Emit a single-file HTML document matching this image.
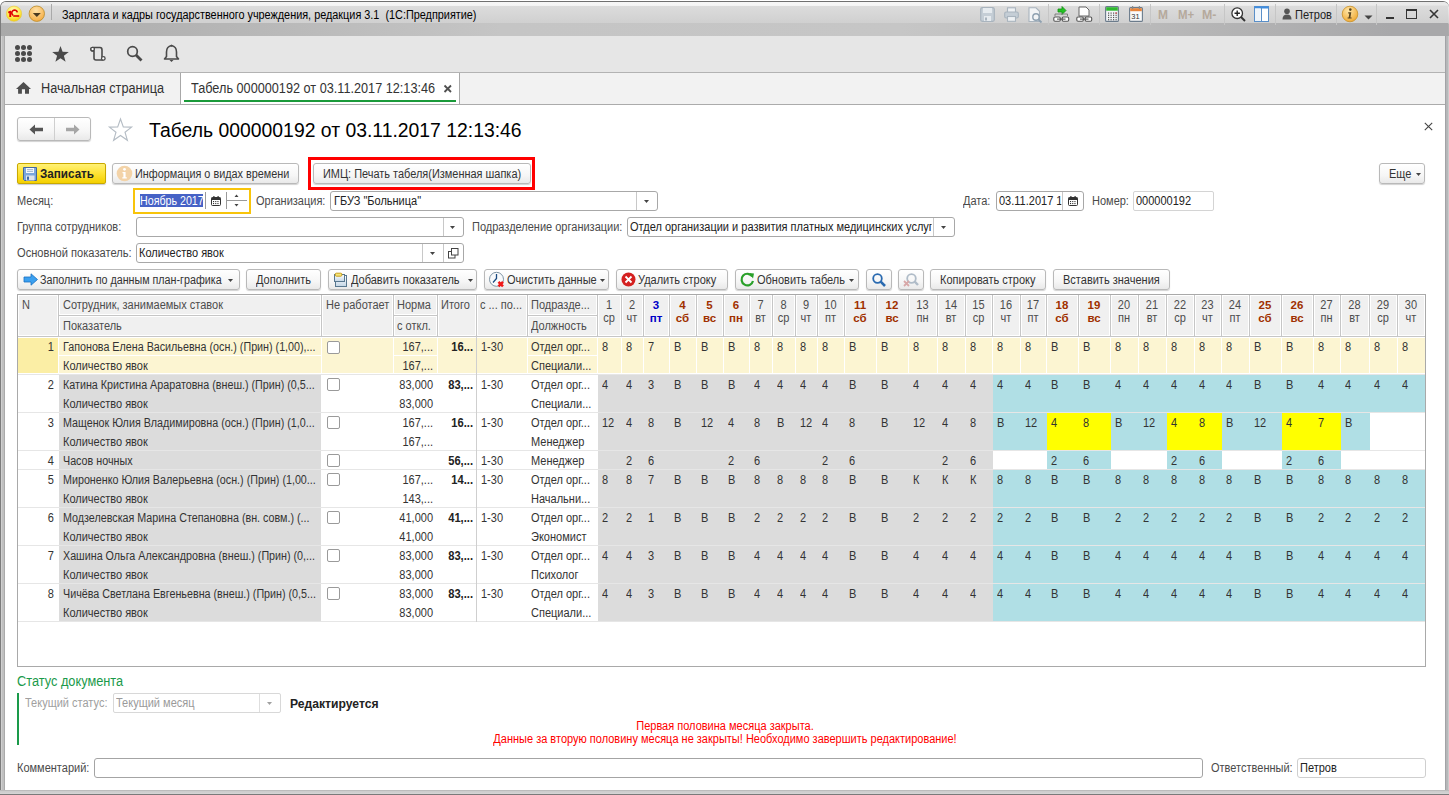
<!DOCTYPE html>
<html><head><meta charset="utf-8"><title>Табель</title>
<style>
html,body{margin:0;padding:0;width:1449px;height:795px;overflow:hidden;background:#a8a8a8;}
body{position:relative;font-family:"Liberation Sans",sans-serif;}
.r{position:absolute;box-sizing:border-box;}
.t{position:absolute;white-space:nowrap;line-height:normal;}
svg.r{overflow:visible;}
</style></head><body>
<div class="r" style="left:0px;top:0px;width:1449px;height:795px;background:#ffffff;"></div>
<div class="r" style="left:0px;top:1px;width:1449px;height:794px;background:linear-gradient(180deg,#f2f2f2 0,#e4e4e4 10px,#d2d2d2 21px,#b2b2b2 22px,#aeaeae 28px,#a9a9a9 35px,#b4b4b4 36px,#b4b4b4 100%);border-top:1px solid #707070;border-left:1px solid #7c7c7c;border-radius:6px 6px 0 0;"></div>
<div class="r" style="left:1px;top:2px;width:1447px;height:21px;background:linear-gradient(90deg,rgba(255,255,255,0) 0,rgba(255,255,255,.55) 250px,rgba(255,255,255,.6) 900px,rgba(255,255,255,.5) 1110px,rgba(255,255,255,0) 1447px) 0 0/100% 4px no-repeat,linear-gradient(180deg,#e9e9e9 0,#e9e9e9 3px,#dcdcdc 4px,#d0d0d0 21px);border-radius:5px 5px 0 0;"></div>
<div class="r" style="left:1px;top:23px;width:1447px;height:13px;background:linear-gradient(90deg,#a9a9a9 0,#b0b0b0 110px,#b8b8b8 260px,#c5c5c5 500px,#c6c6c6 900px,#bcbcbc 1110px,#a8a8aa 1390px,#a8a8aa 100%);"></div>
<div class="r" style="left:1px;top:36px;width:4px;height:755px;background:linear-gradient(90deg,#d0d0d0 0,#d0d0d0 1px,#c0c0c0 1px,#c0c0c0 3px,#aaaaaa 3px);"></div>
<div class="r" style="left:1445px;top:36px;width:4px;height:755px;background:linear-gradient(90deg,#a2a3a6 0,#a2a3a6 1px,#b5b6b8 1px,#b8b9bb 3px,#cbcbcb 3px);"></div>
<div class="r" style="left:0px;top:790px;width:1449px;height:5px;background:linear-gradient(180deg,#bcbcbc 0,#bcbcbc 1px,#cbcbcb 1px,#cfcfcf 2px,#d0d0d0 3px,#d8d8d8 4px,#7a7a7a 4px);"></div>
<div class="r" style="left:5px;top:36px;width:1440px;height:36px;background:#e6e6e6;"></div>
<div class="r" style="left:5px;top:72px;width:1440px;height:1px;background:#b3b3b3;"></div>
<div class="r" style="left:5px;top:73px;width:1440px;height:31px;background:#f2f2f2;"></div>
<div class="r" style="left:5px;top:104px;width:1440px;height:1px;background:#ababab;"></div>
<div class="r" style="left:5px;top:105px;width:1440px;height:685px;background:#ffffff;"></div>
<svg class="r" style="left:0px;top:0px" width="60" height="30" viewBox="0 0 60 30"><defs><radialGradient id="g1" cx="45%" cy="30%" r="75%"><stop offset="0" stop-color="#fffbc0"/><stop offset="0.6" stop-color="#ffe94a"/><stop offset="1" stop-color="#f2c800"/></radialGradient><radialGradient id="g2" cx="45%" cy="30%" r="75%"><stop offset="0" stop-color="#ffe2a8"/><stop offset="1" stop-color="#f5a93c"/></radialGradient></defs><circle cx="14" cy="13.7" r="7.6" fill="url(#g1)" stroke="#e6c640" stroke-width="0.6"/><path d="M8.2 11.6 L10.2 10.8 H11.2 V16.9 H9.3 V12.9 L8.2 13.3 Z" fill="#e00000"/><path d="M17.3 12.3 A2.8 2.8 0 1 0 13.2 15.3" fill="none" stroke="#e00000" stroke-width="1.7"/><path d="M13.2 15.2 H19.2 V16.8 H13.2 Z" fill="#e00000"/><circle cx="36.8" cy="13.7" r="7.7" fill="url(#g2)" stroke="#b88a2a" stroke-width="0.8"/><path d="M32.8 12.9 H40.8 L36.8 17 Z" fill="#4a3a20"/><rect x="51" y="4" width="1" height="16" fill="#a9a9a9"/></svg>
<div class="t" style="left:62px;top:7.64px;font-size:12px;color:#000;transform:scaleX(0.905);transform-origin:0 0;">Зарплата и кадры государственного учреждения, редакция 3.1  (1С:Предприятие)</div>
<svg class="r" style="left:980px;top:7px" width="15" height="15" viewBox="0 0 15 15"><rect x="0.7" y="0.7" width="13.6" height="13.6" rx="1.5" fill="#c5ced6" stroke="#a9b4be" stroke-width="1.2"/><rect x="3" y="1" width="9" height="5" fill="#e6ebef"/><rect x="4" y="9" width="7" height="5" fill="#e6ebef"/><rect x="5" y="10.5" width="2" height="3" fill="#a9b4be"/></svg>
<svg class="r" style="left:1004px;top:7px" width="15" height="15" viewBox="0 0 15 15"><rect x="3.5" y="0.8" width="8" height="5" fill="#eef1f4" stroke="#a9b4be" stroke-width="1.1"/><rect x="0.7" y="5" width="13.6" height="6" rx="1.5" fill="#c5ced6" stroke="#a9b4be" stroke-width="1.1"/><rect x="3.5" y="9.5" width="8" height="4.8" fill="#eef1f4" stroke="#a9b4be" stroke-width="1.1"/></svg>
<svg class="r" style="left:1028px;top:7px" width="15" height="16" viewBox="0 0 15 16"><path d="M1 0.8 H8 L11.5 4.3 V14.5 H1 Z" fill="#f2f4f6" stroke="#a9b4be" stroke-width="1.1"/><circle cx="8" cy="10" r="3.2" fill="none" stroke="#8ea0b0" stroke-width="1.4"/><path d="M10.3 12.3 L13.5 15.5" stroke="#8ea0b0" stroke-width="1.8"/></svg>
<div class="r" style="left:1048px;top:4px;width:1px;height:21px;background:#c6c6c6;"></div>
<svg class="r" style="left:1053px;top:6px" width="17" height="17" viewBox="0 0 17 17"><path d="M5 3 H9 V0.5 L13 4.5 L9 8.5 V6 H5 Z" fill="#22c322" stroke="#139013" stroke-width="0.8"/><rect x="0.8" y="11" width="6.5" height="4.2" rx="1.2" fill="#fff" stroke="#555" stroke-width="1.1"/><rect x="9.2" y="11" width="6.5" height="4.2" rx="1.2" fill="#fff" stroke="#555" stroke-width="1.1"/><path d="M4 13.1 H12.5" stroke="#555" stroke-width="1.1"/><path d="M2 10 V8 H14.5 V10" fill="none" stroke="#777" stroke-width="0.9"/></svg>
<svg class="r" style="left:1076px;top:6px" width="17" height="17" viewBox="0 0 17 17"><path d="M3 1 H10 L13 4 V10 H3 Z" fill="#fff" stroke="#666" stroke-width="1"/><rect x="0.8" y="11" width="6.5" height="4.2" rx="1.2" fill="#fff" stroke="#555" stroke-width="1.1"/><rect x="9.2" y="11" width="6.5" height="4.2" rx="1.2" fill="#fff" stroke="#555" stroke-width="1.1"/><path d="M4 13.1 H12.5" stroke="#555" stroke-width="1.1"/></svg>
<div class="r" style="left:1099px;top:4px;width:1px;height:21px;background:#c6c6c6;"></div>
<svg class="r" style="left:1105px;top:6px" width="14" height="16" viewBox="0 0 14 16"><rect x="0.6" y="0.6" width="12.8" height="14.8" rx="1" fill="#f4f6f8" stroke="#6b7b8b" stroke-width="1.1"/><rect x="1.2" y="1.2" width="11.6" height="3.5" fill="#2eb82e"/><rect x="3.0" y="6.5" width="1.2" height="1.2" fill="#555"/><rect x="3.0" y="8.7" width="1.2" height="1.2" fill="#555"/><rect x="3.0" y="10.9" width="1.2" height="1.2" fill="#555"/><rect x="3.0" y="13.100000000000001" width="1.2" height="1.2" fill="#555"/><rect x="5.5" y="6.5" width="1.2" height="1.2" fill="#555"/><rect x="5.5" y="8.7" width="1.2" height="1.2" fill="#555"/><rect x="5.5" y="10.9" width="1.2" height="1.2" fill="#555"/><rect x="5.5" y="13.100000000000001" width="1.2" height="1.2" fill="#555"/><rect x="8.0" y="6.5" width="1.2" height="1.2" fill="#555"/><rect x="8.0" y="8.7" width="1.2" height="1.2" fill="#555"/><rect x="8.0" y="10.9" width="1.2" height="1.2" fill="#555"/><rect x="8.0" y="13.100000000000001" width="1.2" height="1.2" fill="#555"/><rect x="10.5" y="6.5" width="1.2" height="1.2" fill="#555"/><rect x="10.5" y="8.7" width="1.2" height="1.2" fill="#555"/><rect x="10.5" y="10.9" width="1.2" height="1.2" fill="#555"/><rect x="10.5" y="13.100000000000001" width="1.2" height="1.2" fill="#555"/><rect x="10.5" y="6.5" width="1.2" height="1.2" fill="#e02020"/></svg>
<svg class="r" style="left:1129px;top:6px" width="14" height="16" viewBox="0 0 14 16"><rect x="0.6" y="1.6" width="12.8" height="13.8" rx="1" fill="#fafafa" stroke="#6b7b8b" stroke-width="1.1"/><rect x="1.2" y="2.2" width="11.6" height="3" fill="#e8843a"/><rect x="3" y="0" width="1.2" height="3" fill="#888"/><rect x="9.8" y="0" width="1.2" height="3" fill="#888"/><text x="2.3" y="13.2" font-family="Liberation Sans" font-size="7.5" fill="#333">31</text></svg>
<div class="r" style="left:1150px;top:4px;width:1px;height:21px;background:#c6c6c6;"></div>
<div class="t" style="left:1157.5px;top:6.73px;font-size:13px;color:#b5a99c;font-weight:bold;transform:scaleX(0.92);transform-origin:0 0;">M</div>
<div class="t" style="left:1177.5px;top:6.73px;font-size:13px;color:#b5a99c;font-weight:bold;transform:scaleX(0.88);transform-origin:0 0;">M+</div>
<div class="t" style="left:1202px;top:6.73px;font-size:13px;color:#b5a99c;font-weight:bold;transform:scaleX(0.95);transform-origin:0 0;">M-</div>
<div class="r" style="left:1224px;top:4px;width:1px;height:21px;background:#c6c6c6;"></div>
<svg class="r" style="left:1231px;top:7px" width="15" height="15" viewBox="0 0 15 15"><circle cx="6.2" cy="6.2" r="5.3" fill="#fff" stroke="#333" stroke-width="1.3"/><path d="M3.5 6.2 H8.9 M6.2 3.5 V8.9" stroke="#222" stroke-width="1.4"/><path d="M10 10 L14 14" stroke="#333" stroke-width="2"/></svg>
<svg class="r" style="left:1254px;top:6px" width="15" height="16" viewBox="0 0 15 16"><rect x="0.5" y="0.5" width="14" height="15" fill="#fff" stroke="#5a8fc8" stroke-width="1"/><rect x="0.5" y="0.5" width="14" height="2" fill="#3f8de0"/><rect x="1" y="2.5" width="5.5" height="12.5" fill="#eef4fa"/><rect x="7" y="2" width="1" height="13.5" fill="#5a8fc8"/></svg>
<div class="r" style="left:1275px;top:4px;width:1px;height:21px;background:#c6c6c6;"></div>
<svg class="r" style="left:1282px;top:8px" width="10" height="12" viewBox="0 0 10 12"><circle cx="5" cy="3.2" r="2.8" fill="#555"/><path d="M0.5 11.5 Q0.5 6.5 5 6.5 Q9.5 6.5 9.5 11.5 Z" fill="#555"/></svg>
<div class="t" style="left:1295px;top:7.64px;font-size:12px;color:#222;transform:scaleX(0.92);transform-origin:0 0;">Петров</div>
<div class="r" style="left:1336px;top:4px;width:1px;height:21px;background:#c6c6c6;"></div>
<svg class="r" style="left:1341px;top:5px" width="18" height="18" viewBox="0 0 18 18"><defs><radialGradient id="g3" cx="40%" cy="30%" r="75%"><stop offset="0" stop-color="#ffe6a8"/><stop offset="1" stop-color="#f0a830"/></radialGradient></defs><circle cx="9" cy="9" r="7.8" fill="url(#g3)" stroke="#c89028" stroke-width="0.8"/><circle cx="9.3" cy="4.6" r="1.3" fill="#5a4520"/><path d="M7.2 7.2 H10.3 L9.4 12.4 H10.6 V13.6 H6.6 V12.4 H7.7 L8.3 8.4 H7.2 Z" fill="#5a4520"/></svg>
<svg class="r" style="left:1364px;top:15px" width="9" height="5" viewBox="0 0 9 5"><path d="M0.5 0.5 H8.5 L4.5 4.5 Z" fill="#444"/></svg>
<div class="r" style="left:1376px;top:4px;width:1px;height:21px;background:#c6c6c6;"></div>
<div class="r" style="left:1386px;top:17px;width:8px;height:2px;background:#333;"></div>
<div class="r" style="left:1406px;top:9px;width:11px;height:10px;border:1px solid #333;border-top:2px solid #333;"></div>
<svg class="r" style="left:1429px;top:9px" width="10" height="10" viewBox="0 0 10 10"><path d="M1 1 L9 9 M9 1 L1 9" stroke="#333" stroke-width="1.6"/></svg>
<svg class="r" style="left:15px;top:45px" width="17" height="17" viewBox="0 0 17 17"><circle cx="2.5" cy="2.5" r="2.5" fill="#4a4a4a"/><circle cx="2.5" cy="8.5" r="2.5" fill="#4a4a4a"/><circle cx="2.5" cy="14.5" r="2.5" fill="#4a4a4a"/><circle cx="8.5" cy="2.5" r="2.5" fill="#4a4a4a"/><circle cx="8.5" cy="8.5" r="2.5" fill="#4a4a4a"/><circle cx="8.5" cy="14.5" r="2.5" fill="#4a4a4a"/><circle cx="14.5" cy="2.5" r="2.5" fill="#4a4a4a"/><circle cx="14.5" cy="8.5" r="2.5" fill="#4a4a4a"/><circle cx="14.5" cy="14.5" r="2.5" fill="#4a4a4a"/></svg>
<svg class="r" style="left:52px;top:46px" width="17" height="16" viewBox="0 0 17 16"><path d="M8.5 0 L10.6 5.8 L16.8 6 L11.9 9.8 L13.6 15.8 L8.5 12.3 L3.4 15.8 L5.1 9.8 L0.2 6 L6.4 5.8 Z" fill="#4a4a4a"/></svg>
<svg class="r" style="left:89px;top:45px" width="18" height="17" viewBox="0 0 18 17"><path d="M4 2.5 H11 Q13 2.5 13 5 V12.5 M4 2.5 Q2 2.5 2 4.2 Q2 6 4 6 H5 V13 Q5 15 7 15 H14.5" fill="none" stroke="#4a4a4a" stroke-width="1.6"/><circle cx="3.6" cy="4.1" r="1.8" fill="#fff" stroke="#4a4a4a" stroke-width="1.3"/><circle cx="14.3" cy="13.4" r="1.8" fill="#fff" stroke="#4a4a4a" stroke-width="1.3"/></svg>
<svg class="r" style="left:126px;top:45px" width="17" height="17" viewBox="0 0 17 17"><circle cx="6.5" cy="6.5" r="4.8" fill="none" stroke="#4a4a4a" stroke-width="1.7"/><path d="M10 10 L15.5 15.5" stroke="#4a4a4a" stroke-width="2.8"/></svg>
<svg class="r" style="left:163px;top:44px" width="17" height="19" viewBox="0 0 17 19"><path d="M8.5 1.5 Q13.5 2.5 13.5 8 V12.5 L15.5 15 H1.5 L3.5 12.5 V8 Q3.5 2.5 8.5 1.5 Z" fill="none" stroke="#4a4a4a" stroke-width="1.6" stroke-linejoin="round"/><path d="M6.5 16 H10.5 L8.5 18 Z" fill="#4a4a4a"/><circle cx="8.5" cy="1.8" r="1" fill="#4a4a4a"/></svg>
<svg class="r" style="left:16px;top:82px" width="15" height="12" viewBox="0 0 15 12"><path d="M0 7 L7.5 0 L15 7 Z M2.1 6.5 H13 V11.8 H9 V7.3 H5.9 V11.8 H2.1 Z" fill="#4d4d4d"/></svg>
<div class="t" style="left:41px;top:80.33px;font-size:14px;color:#333;transform:scaleX(0.908);transform-origin:0 0;">Начальная страница</div>
<div class="r" style="left:180px;top:73px;width:1px;height:31px;background:#a8a8a8;"></div>
<div class="r" style="left:459px;top:73px;width:1px;height:31px;background:#a8a8a8;"></div>
<div class="r" style="left:181px;top:73px;width:278px;height:31px;background:#ffffff;"></div>
<div class="r" style="left:184px;top:100px;width:272px;height:2px;background:#1a9a3a;"></div>
<div class="t" style="left:191px;top:80.33px;font-size:14px;color:#333;transform:scaleX(0.906);transform-origin:0 0;">Табель 000000192 от 03.11.2017 12:13:46</div>
<svg class="r" style="left:443px;top:84px" width="10" height="10" viewBox="0 0 10 10"><path d="M1.5 1.5 L8 8 M8 1.5 L1.5 8" stroke="#505050" stroke-width="1.8"/></svg>
<div class="r" style="left:17px;top:117px;width:74px;height:24px;background:linear-gradient(180deg,#ffffff 0,#f6f6f6 60%,#e9e9e9 100%);border:1px solid #b9b9b9;border-radius:3px;box-shadow:0 1px 1px rgba(0,0,0,0.18);"></div>
<div class="r" style="left:54px;top:118px;width:1px;height:22px;background:#cfcfcf;"></div>
<svg class="r" style="left:29px;top:124px" width="15" height="12" viewBox="0 0 15 12"><path d="M0.5 5.5 L6 0.5 V3.8 H14 V7.2 H6 V10.5 Z" fill="#555"/></svg>
<svg class="r" style="left:65px;top:124px" width="15" height="12" viewBox="0 0 15 12"><path d="M14.5 5.5 L9 0.5 V3.8 H1 V7.2 H9 V10.5 Z" fill="#a6a6a6"/></svg>
<svg class="r" style="left:108px;top:118px" width="25" height="24" viewBox="0 0 25 24"><path d="M12.5 1 L15.3 8.9 L23.6 9.1 L17 14.2 L19.4 22.3 L12.5 17.5 L5.6 22.3 L8 14.2 L1.4 9.1 L9.7 8.9 Z" fill="#fff" stroke="#b4bcc4" stroke-width="1.1"/></svg>
<div class="t" style="left:148.5px;top:119.35px;font-size:19.5px;color:#000;transform:scaleX(0.993);transform-origin:0 0;">Табель 000000192 от 03.11.2017 12:13:46</div>
<svg class="r" style="left:1424px;top:122px" width="9" height="9" viewBox="0 0 9 9"><path d="M0.8 0.8 L8.2 8.2 M8.2 0.8 L0.8 8.2" stroke="#444" stroke-width="1.1"/></svg>
<div class="r" style="left:17px;top:163px;width:89px;height:21px;background:linear-gradient(180deg,#fff176 0,#ffe43a 45%,#f4d000 100%);border:1px solid #c9a900;border-radius:2px;box-shadow:0 1px 1px rgba(0,0,0,0.2);"></div>
<svg class="r" style="left:23px;top:167px" width="14" height="14" viewBox="0 0 14 14"><path d="M0.5 0.5 H13.5 V13.5 H1.5 L0.5 12.5 Z" fill="#7aa6dc" stroke="#44679a" stroke-width="1"/><rect x="3" y="1" width="8" height="5" fill="#f4f8fc"/><path d="M4 2.6 H10 M4 4.4 H10" stroke="#8aa4c4" stroke-width="0.8"/><rect x="3" y="8.5" width="8.5" height="5" fill="#dfe4ea"/><rect x="4" y="9.6" width="2" height="3.2" fill="#3a6aaa"/></svg>
<div class="t" style="left:40px;top:167.14px;font-size:12px;color:#222;font-weight:bold;transform:scaleX(0.97185);transform-origin:0 0;">Записать</div>
<div class="r" style="left:112px;top:163px;width:187px;height:21px;background:linear-gradient(180deg,#ffffff 0,#f6f6f6 60%,#e9e9e9 100%);border:1px solid #b9b9b9;border-radius:3px;box-shadow:0 1px 1px rgba(0,0,0,0.18);"></div>
<svg class="r" style="left:116px;top:165px" width="17" height="17" viewBox="0 0 17 17"><circle cx="8.5" cy="8.5" r="7.8" fill="#f3d3a8"/><circle cx="8.5" cy="4.3" r="1.4" fill="#fff"/><path d="M6.5 7 H9.6 V12.3 H10.8 V13.6 H6.3 V12.3 H7.4 V8.3 H6.5 Z" fill="#fff"/></svg>
<div class="t" style="left:135px;top:167.14px;font-size:12px;color:#333;transform:scaleX(0.9032450000000001);transform-origin:0 0;">Информация о видах времени</div>
<div class="r" style="left:308px;top:157px;width:227px;height:33px;border:3px solid #ff0000;"></div>
<div class="r" style="left:313px;top:163px;width:218px;height:21px;background:linear-gradient(180deg,#ffffff 0,#f6f6f6 60%,#e9e9e9 100%);border:1px solid #b9b9b9;border-radius:3px;box-shadow:0 1px 1px rgba(0,0,0,0.18);"></div>
<div class="t" style="left:323px;top:167.14px;font-size:12px;color:#333;transform:scaleX(0.9124150000000001);transform-origin:0 0;">ИМЦ: Печать табеля(Изменная шапка)</div>
<div class="r" style="left:1379px;top:163px;width:46px;height:21px;background:linear-gradient(180deg,#ffffff 0,#f6f6f6 60%,#e9e9e9 100%);border:1px solid #b9b9b9;border-radius:3px;box-shadow:0 1px 1px rgba(0,0,0,0.18);"></div>
<div class="t" style="left:1389px;top:167.14px;font-size:12px;color:#333;transform:scaleX(0.917);transform-origin:0 0;">Еще</div>
<svg class="r" style="left:1415.8px;top:173px" width="6" height="4" viewBox="0 0 6 4"><path d="M0 0 H5 L2.5 3 Z" fill="#444"/></svg>
<div class="t" style="left:17px;top:194.14px;font-size:12px;color:#4a4a4a;transform:scaleX(0.917);transform-origin:0 0;">Месяц:</div>
<div class="r" style="left:133px;top:188px;width:118px;height:26px;border:2px solid #f8c40a;background:#fff;"></div>
<div class="r" style="left:138px;top:193px;width:108px;height:16px;border:0;"></div>
<div class="r" style="left:140px;top:194px;width:63px;height:13px;background:#4662c6;"></div>
<div class="t" style="left:139.5px;top:194.14px;font-size:12px;color:#ffffff;transform:scaleX(0.88949);transform-origin:0 0;">Ноябрь 2017</div>
<div class="r" style="left:205px;top:192px;width:1px;height:17px;background:#9a9a9a;"></div>
<svg class="r" style="left:211px;top:196px" width="10" height="10" viewBox="0 0 10 10"><rect x="0.5" y="1.5" width="9" height="8" rx="1" fill="#fff" stroke="#333" stroke-width="1"/><rect x="0.5" y="1.5" width="9" height="2.5" fill="#333"/><rect x="2.0" y="5" width="1.1" height="1.1" fill="#333"/><rect x="2.0" y="7" width="1.1" height="1.1" fill="#333"/><rect x="4.2" y="5" width="1.1" height="1.1" fill="#333"/><rect x="4.2" y="7" width="1.1" height="1.1" fill="#333"/><rect x="6.4" y="5" width="1.1" height="1.1" fill="#333"/><rect x="6.4" y="7" width="1.1" height="1.1" fill="#333"/><rect x="2.3" y="0" width="1.2" height="2" fill="#333"/><rect x="6.5" y="0" width="1.2" height="2" fill="#333"/></svg>
<div class="r" style="left:226px;top:192px;width:1px;height:17px;background:#9a9a9a;"></div>
<div class="r" style="left:227px;top:200px;width:20px;height:1px;background:#9a9a9a;"></div>
<svg class="r" style="left:234px;top:194px" width="5" height="14" viewBox="0 0 5 14"><path d="M0.5 3 L2.5 0.5 L4.5 3 Z M0.5 10 L2.5 12.5 L4.5 10 Z" fill="#444"/></svg>
<div class="t" style="left:256px;top:194.14px;font-size:12px;color:#4a4a4a;transform:scaleX(0.917);transform-origin:0 0;">Организация:</div>
<div class="r" style="left:330px;top:191px;width:328px;height:20px;background:#fff;border:1px solid #a8a8a8;border-radius:3px;"></div>
<div class="t" style="left:334px;top:194.14px;font-size:12px;color:#222;transform:scaleX(0.917);transform-origin:0 0;">ГБУЗ &quot;Больница&quot;</div>
<div class="r" style="left:636px;top:192px;width:1px;height:18px;background:#c8c8c8;"></div>
<svg class="r" style="left:644.0px;top:200px" width="6" height="4" viewBox="0 0 6 4"><path d="M0 0 H5 L2.5 3 Z" fill="#444"/></svg>
<div class="t" style="left:963px;top:194.14px;font-size:12px;color:#4a4a4a;transform:scaleX(0.917);transform-origin:0 0;">Дата:</div>
<div class="r" style="left:996px;top:191px;width:88px;height:20px;background:#fff;border:1px solid #a8a8a8;border-radius:3px;"></div>
<div class="t" style="left:999px;top:194.14px;font-size:12px;color:#222;transform:scaleX(0.917);transform-origin:0 0;width:68px;overflow:hidden;">03.11.2017 12:13:46</div>
<div class="r" style="left:1062px;top:192px;width:1px;height:18px;background:#c8c8c8;"></div>
<svg class="r" style="left:1068px;top:196px" width="10" height="10" viewBox="0 0 10 10"><rect x="0.5" y="1.5" width="9" height="8" rx="1" fill="#fff" stroke="#333" stroke-width="1"/><rect x="0.5" y="1.5" width="9" height="2.5" fill="#333"/><rect x="2.0" y="5" width="1.1" height="1.1" fill="#333"/><rect x="2.0" y="7" width="1.1" height="1.1" fill="#333"/><rect x="4.2" y="5" width="1.1" height="1.1" fill="#333"/><rect x="4.2" y="7" width="1.1" height="1.1" fill="#333"/><rect x="6.4" y="5" width="1.1" height="1.1" fill="#333"/><rect x="6.4" y="7" width="1.1" height="1.1" fill="#333"/><rect x="2.3" y="0" width="1.2" height="2" fill="#333"/><rect x="6.5" y="0" width="1.2" height="2" fill="#333"/></svg>
<div class="t" style="left:1092px;top:194.14px;font-size:12px;color:#4a4a4a;transform:scaleX(0.917);transform-origin:0 0;">Номер:</div>
<div class="r" style="left:1133px;top:191px;width:81px;height:20px;background:#fff;border:1px solid #d4d4d4;border-radius:2px;"></div>
<div class="t" style="left:1136px;top:194.14px;font-size:12px;color:#222;transform:scaleX(0.917);transform-origin:0 0;">000000192</div>
<div class="t" style="left:17px;top:220.14px;font-size:12px;color:#4a4a4a;transform:scaleX(0.917);transform-origin:0 0;">Группа сотрудников:</div>
<div class="r" style="left:136px;top:217px;width:328px;height:20px;background:#fff;border:1px solid #a8a8a8;border-radius:3px;"></div>
<div class="r" style="left:443px;top:218px;width:1px;height:18px;background:#c8c8c8;"></div>
<svg class="r" style="left:450.2px;top:226px" width="6" height="4" viewBox="0 0 6 4"><path d="M0 0 H5 L2.5 3 Z" fill="#444"/></svg>
<div class="t" style="left:472px;top:220.14px;font-size:12px;color:#4a4a4a;transform:scaleX(0.917);transform-origin:0 0;">Подразделение организации:</div>
<div class="r" style="left:627px;top:217px;width:328px;height:20px;background:#fff;border:1px solid #a8a8a8;border-radius:3px;"></div>
<div class="t" style="left:630px;top:220.14px;font-size:12px;color:#222;transform:scaleX(0.917);transform-origin:0 0;width:329px;overflow:hidden;">Отдел организации и развития платных медицинских услуг</div>
<div class="r" style="left:933px;top:218px;width:1px;height:18px;background:#c8c8c8;"></div>
<svg class="r" style="left:941.0px;top:226px" width="6" height="4" viewBox="0 0 6 4"><path d="M0 0 H5 L2.5 3 Z" fill="#444"/></svg>
<div class="t" style="left:17px;top:246.14px;font-size:12px;color:#4a4a4a;transform:scaleX(0.92617);transform-origin:0 0;">Основной показатель:</div>
<div class="r" style="left:136px;top:243px;width:328px;height:20px;background:#fff;border:1px solid #a8a8a8;border-radius:3px;"></div>
<div class="t" style="left:139px;top:246.14px;font-size:12px;color:#222;transform:scaleX(0.917);transform-origin:0 0;">Количество явок</div>
<div class="r" style="left:422px;top:244px;width:1px;height:18px;background:#c8c8c8;"></div>
<svg class="r" style="left:429.5px;top:252px" width="6" height="4" viewBox="0 0 6 4"><path d="M0 0 H5 L2.5 3 Z" fill="#444"/></svg>
<div class="r" style="left:443px;top:244px;width:1px;height:18px;background:#c8c8c8;"></div>
<svg class="r" style="left:448px;top:248px" width="11" height="11" viewBox="0 0 11 11"><rect x="0.5" y="3.5" width="6.5" height="6.5" fill="#fff" stroke="#444" stroke-width="1"/><rect x="3.5" y="0.5" width="6.5" height="6.5" fill="#fff" stroke="#444" stroke-width="1"/></svg>
<div class="r" style="left:17px;top:269px;width:223px;height:21px;background:linear-gradient(180deg,#ffffff 0,#f6f6f6 60%,#e9e9e9 100%);border:1px solid #b9b9b9;border-radius:3px;box-shadow:0 1px 1px rgba(0,0,0,0.18);"></div>
<svg class="r" style="left:227.5px;top:279px" width="6" height="4" viewBox="0 0 6 4"><path d="M0 0 H5 L2.5 3 Z" fill="#444"/></svg>
<div class="t" style="left:40px;top:273.14px;font-size:12px;color:#333;transform:scaleX(0.8940750000000001);transform-origin:0 0;">Заполнить по данным план-графика</div>
<svg class="r" style="left:23px;top:273px" width="16" height="13" viewBox="0 0 16 13"><path d="M1 4 H8 V0.8 L14.5 6.5 L8 12.2 V9 H1 Z" fill="#3aa0f0" stroke="#1a70c0" stroke-width="0.8"/></svg>
<div class="r" style="left:246px;top:269px;width:75px;height:21px;background:linear-gradient(180deg,#ffffff 0,#f6f6f6 60%,#e9e9e9 100%);border:1px solid #b9b9b9;border-radius:3px;box-shadow:0 1px 1px rgba(0,0,0,0.18);"></div>
<div class="t" style="left:256px;top:273.14px;font-size:12px;color:#333;transform:scaleX(0.917);transform-origin:0 0;">Дополнить</div>
<div class="r" style="left:328px;top:269px;width:149px;height:21px;background:linear-gradient(180deg,#ffffff 0,#f6f6f6 60%,#e9e9e9 100%);border:1px solid #b9b9b9;border-radius:3px;box-shadow:0 1px 1px rgba(0,0,0,0.18);"></div>
<div class="t" style="left:351px;top:273.14px;font-size:12px;color:#333;transform:scaleX(0.917);transform-origin:0 0;">Добавить показатель</div>
<svg class="r" style="left:467.7px;top:279px" width="6" height="4" viewBox="0 0 6 4"><path d="M0 0 H5 L2.5 3 Z" fill="#444"/></svg>
<svg class="r" style="left:333px;top:272px" width="15" height="16" viewBox="0 0 15 16"><defs><linearGradient id="cg" x1="0" y1="0" x2="0" y2="1"><stop offset="0" stop-color="#ffffff"/><stop offset="1" stop-color="#c4d6e6"/></linearGradient></defs><rect x="2.5" y="3.5" width="11" height="11" fill="url(#cg)" stroke="#58778f" stroke-width="1"/><rect x="1.5" y="2.5" width="10" height="7" fill="url(#cg)" stroke="#58778f" stroke-width="1"/><rect x="2.3" y="1.2" width="6.5" height="3" rx="1" fill="#f6e67a" stroke="#c4960e" stroke-width="0.9"/></svg>
<div class="r" style="left:484px;top:269px;width:125px;height:21px;background:linear-gradient(180deg,#ffffff 0,#f6f6f6 60%,#e9e9e9 100%);border:1px solid #b9b9b9;border-radius:3px;box-shadow:0 1px 1px rgba(0,0,0,0.18);"></div>
<div class="t" style="left:507px;top:273.14px;font-size:12px;color:#333;transform:scaleX(0.917);transform-origin:0 0;">Очистить данные</div>
<svg class="r" style="left:599.7px;top:279px" width="6" height="4" viewBox="0 0 6 4"><path d="M0 0 H5 L2.5 3 Z" fill="#444"/></svg>
<svg class="r" style="left:488px;top:271px" width="18" height="18" viewBox="0 0 18 18"><circle cx="8.5" cy="8.3" r="7" fill="#f8fafc" stroke="#70889a" stroke-width="0.9"/><path d="M8.5 3 V7.5 L5 11.5" fill="none" stroke="#1a4a80" stroke-width="1.3"/><path d="M10.5 10.8 L15 15.3 M15 10.8 L10.5 15.3" stroke="#f01818" stroke-width="2.6"/></svg>
<div class="r" style="left:616px;top:269px;width:112px;height:21px;background:linear-gradient(180deg,#ffffff 0,#f6f6f6 60%,#e9e9e9 100%);border:1px solid #b9b9b9;border-radius:3px;box-shadow:0 1px 1px rgba(0,0,0,0.18);"></div>
<div class="t" style="left:638px;top:273.14px;font-size:12px;color:#333;transform:scaleX(0.917);transform-origin:0 0;">Удалить строку</div>
<svg class="r" style="left:621px;top:272px" width="15" height="15" viewBox="0 0 15 15"><circle cx="7.5" cy="7.5" r="7" fill="#d42020"/><path d="M4.5 4.5 L10.5 10.5 M10.5 4.5 L4.5 10.5" stroke="#fff" stroke-width="1.8"/></svg>
<div class="r" style="left:735px;top:269px;width:124px;height:21px;background:linear-gradient(180deg,#ffffff 0,#f6f6f6 60%,#e9e9e9 100%);border:1px solid #b9b9b9;border-radius:3px;box-shadow:0 1px 1px rgba(0,0,0,0.18);"></div>
<div class="t" style="left:757px;top:273.14px;font-size:12px;color:#333;transform:scaleX(0.917);transform-origin:0 0;">Обновить табель</div>
<svg class="r" style="left:849.3px;top:279px" width="6" height="4" viewBox="0 0 6 4"><path d="M0 0 H5 L2.5 3 Z" fill="#444"/></svg>
<svg class="r" style="left:740px;top:272px" width="15" height="15" viewBox="0 0 15 15"><path d="M12.3 4.5 A5.8 5.8 0 1 0 13 9" fill="none" stroke="#2aa02a" stroke-width="2.2"/><path d="M9 1 L14 1.5 L13 6.5 Z" fill="#2aa02a"/></svg>
<div class="r" style="left:866px;top:269px;width:26px;height:21px;background:linear-gradient(180deg,#ffffff 0,#f6f6f6 60%,#e9e9e9 100%);border:1px solid #b9b9b9;border-radius:3px;box-shadow:0 1px 1px rgba(0,0,0,0.18);"></div>
<svg class="r" style="left:872px;top:273px" width="14" height="14" viewBox="0 0 14 14"><circle cx="5.5" cy="5.5" r="4.3" fill="none" stroke="#2a6ab0" stroke-width="1.8"/><path d="M8.7 8.7 L13 13" stroke="#2a6ab0" stroke-width="2.6"/></svg>
<div class="r" style="left:898px;top:269px;width:26px;height:21px;background:linear-gradient(180deg,#ffffff 0,#f6f6f6 60%,#e9e9e9 100%);border:1px solid #b9b9b9;border-radius:3px;box-shadow:0 1px 1px rgba(0,0,0,0.18);"></div>
<svg class="r" style="left:903px;top:273px" width="16" height="14" viewBox="0 0 16 14"><circle cx="8.5" cy="5.5" r="4.3" fill="none" stroke="#b0bcc8" stroke-width="1.8"/><path d="M11.7 8.7 L15 12" stroke="#b0bcc8" stroke-width="2.4"/><path d="M1 8 L6 13 M6 8 L1 13" stroke="#d8a8a8" stroke-width="1.8"/></svg>
<div class="r" style="left:930px;top:269px;width:116px;height:21px;background:linear-gradient(180deg,#ffffff 0,#f6f6f6 60%,#e9e9e9 100%);border:1px solid #b9b9b9;border-radius:3px;box-shadow:0 1px 1px rgba(0,0,0,0.18);"></div>
<div class="t" style="left:940px;top:273.14px;font-size:12px;color:#333;transform:scaleX(0.917);transform-origin:0 0;">Копировать строку</div>
<div class="r" style="left:1053px;top:269px;width:117px;height:21px;background:linear-gradient(180deg,#ffffff 0,#f6f6f6 60%,#e9e9e9 100%);border:1px solid #b9b9b9;border-radius:3px;box-shadow:0 1px 1px rgba(0,0,0,0.18);"></div>
<div class="t" style="left:1063px;top:273.14px;font-size:12px;color:#333;transform:scaleX(0.917);transform-origin:0 0;">Вставить значения</div>
<div class="r" style="left:17px;top:294px;width:1409px;height:373px;border:1px solid #a9a9a9;background:#fff;"></div>
<div class="r" style="left:19px;top:296px;width:38px;height:39px;background:#f0f0f0;"></div>
<div class="r" style="left:60px;top:296px;width:260px;height:18px;background:#f0f0f0;"></div>
<div class="r" style="left:60px;top:317px;width:260px;height:18px;background:#f0f0f0;"></div>
<div class="r" style="left:59px;top:315px;width:262px;height:1px;background:#c6c6c6;"></div>
<div class="r" style="left:323px;top:296px;width:69px;height:39px;background:#f0f0f0;"></div>
<div class="r" style="left:395px;top:296px;width:41px;height:18px;background:#f0f0f0;"></div>
<div class="r" style="left:395px;top:317px;width:41px;height:18px;background:#f0f0f0;"></div>
<div class="r" style="left:394px;top:315px;width:43px;height:1px;background:#c6c6c6;"></div>
<div class="r" style="left:439px;top:296px;width:36px;height:39px;background:#f0f0f0;"></div>
<div class="r" style="left:478px;top:296px;width:48px;height:39px;background:#f0f0f0;"></div>
<div class="r" style="left:529px;top:296px;width:67px;height:18px;background:#f0f0f0;"></div>
<div class="r" style="left:529px;top:317px;width:67px;height:18px;background:#f0f0f0;"></div>
<div class="r" style="left:528px;top:315px;width:69px;height:1px;background:#c6c6c6;"></div>
<div class="r" style="left:599px;top:296px;width:21px;height:39px;background:#f0f0f0;"></div>
<div class="r" style="left:623px;top:296px;width:19px;height:39px;background:#f0f0f0;"></div>
<div class="r" style="left:645px;top:296px;width:23px;height:39px;background:#f0f0f0;"></div>
<div class="r" style="left:671px;top:296px;width:24px;height:39px;background:#f0f0f0;"></div>
<div class="r" style="left:698px;top:296px;width:24px;height:39px;background:#f0f0f0;"></div>
<div class="r" style="left:725px;top:296px;width:23px;height:39px;background:#f0f0f0;"></div>
<div class="r" style="left:751px;top:296px;width:20px;height:39px;background:#f0f0f0;"></div>
<div class="r" style="left:774px;top:296px;width:20px;height:39px;background:#f0f0f0;"></div>
<div class="r" style="left:797px;top:296px;width:19px;height:39px;background:#f0f0f0;"></div>
<div class="r" style="left:819px;top:296px;width:24px;height:39px;background:#f0f0f0;"></div>
<div class="r" style="left:846px;top:296px;width:29px;height:39px;background:#f0f0f0;"></div>
<div class="r" style="left:878px;top:296px;width:29px;height:39px;background:#f0f0f0;"></div>
<div class="r" style="left:910px;top:296px;width:26px;height:39px;background:#f0f0f0;"></div>
<div class="r" style="left:939px;top:296px;width:25px;height:39px;background:#f0f0f0;"></div>
<div class="r" style="left:967px;top:296px;width:24px;height:39px;background:#f0f0f0;"></div>
<div class="r" style="left:994px;top:296px;width:25px;height:39px;background:#f0f0f0;"></div>
<div class="r" style="left:1022px;top:296px;width:23px;height:39px;background:#f0f0f0;"></div>
<div class="r" style="left:1048px;top:296px;width:29px;height:39px;background:#f0f0f0;"></div>
<div class="r" style="left:1080px;top:296px;width:29px;height:39px;background:#f0f0f0;"></div>
<div class="r" style="left:1112px;top:296px;width:25px;height:39px;background:#f0f0f0;"></div>
<div class="r" style="left:1140px;top:296px;width:25px;height:39px;background:#f0f0f0;"></div>
<div class="r" style="left:1168px;top:296px;width:25px;height:39px;background:#f0f0f0;"></div>
<div class="r" style="left:1196px;top:296px;width:24px;height:39px;background:#f0f0f0;"></div>
<div class="r" style="left:1223px;top:296px;width:25px;height:39px;background:#f0f0f0;"></div>
<div class="r" style="left:1251px;top:296px;width:29px;height:39px;background:#f0f0f0;"></div>
<div class="r" style="left:1283px;top:296px;width:29px;height:39px;background:#f0f0f0;"></div>
<div class="r" style="left:1315px;top:296px;width:24px;height:39px;background:#f0f0f0;"></div>
<div class="r" style="left:1342px;top:296px;width:26px;height:39px;background:#f0f0f0;"></div>
<div class="r" style="left:1371px;top:296px;width:25px;height:39px;background:#f0f0f0;"></div>
<div class="r" style="left:1399px;top:296px;width:25px;height:39px;background:#f0f0f0;"></div>
<div class="r" style="left:58px;top:295px;width:1px;height:41px;background:#c6c6c6;"></div>
<div class="r" style="left:321px;top:295px;width:1px;height:41px;background:#c6c6c6;"></div>
<div class="r" style="left:393px;top:295px;width:1px;height:41px;background:#c6c6c6;"></div>
<div class="r" style="left:437px;top:295px;width:1px;height:41px;background:#c6c6c6;"></div>
<div class="r" style="left:476px;top:295px;width:1px;height:41px;background:#c6c6c6;"></div>
<div class="r" style="left:527px;top:295px;width:1px;height:41px;background:#c6c6c6;"></div>
<div class="r" style="left:597px;top:295px;width:1px;height:41px;background:#c6c6c6;"></div>
<div class="r" style="left:621px;top:295px;width:1px;height:41px;background:#c6c6c6;"></div>
<div class="r" style="left:643px;top:295px;width:1px;height:41px;background:#c6c6c6;"></div>
<div class="r" style="left:669px;top:295px;width:1px;height:41px;background:#c6c6c6;"></div>
<div class="r" style="left:696px;top:295px;width:1px;height:41px;background:#c6c6c6;"></div>
<div class="r" style="left:723px;top:295px;width:1px;height:41px;background:#c6c6c6;"></div>
<div class="r" style="left:749px;top:295px;width:1px;height:41px;background:#c6c6c6;"></div>
<div class="r" style="left:772px;top:295px;width:1px;height:41px;background:#c6c6c6;"></div>
<div class="r" style="left:795px;top:295px;width:1px;height:41px;background:#c6c6c6;"></div>
<div class="r" style="left:817px;top:295px;width:1px;height:41px;background:#c6c6c6;"></div>
<div class="r" style="left:844px;top:295px;width:1px;height:41px;background:#c6c6c6;"></div>
<div class="r" style="left:876px;top:295px;width:1px;height:41px;background:#c6c6c6;"></div>
<div class="r" style="left:908px;top:295px;width:1px;height:41px;background:#c6c6c6;"></div>
<div class="r" style="left:937px;top:295px;width:1px;height:41px;background:#c6c6c6;"></div>
<div class="r" style="left:965px;top:295px;width:1px;height:41px;background:#c6c6c6;"></div>
<div class="r" style="left:992px;top:295px;width:1px;height:41px;background:#c6c6c6;"></div>
<div class="r" style="left:1020px;top:295px;width:1px;height:41px;background:#c6c6c6;"></div>
<div class="r" style="left:1046px;top:295px;width:1px;height:41px;background:#c6c6c6;"></div>
<div class="r" style="left:1078px;top:295px;width:1px;height:41px;background:#c6c6c6;"></div>
<div class="r" style="left:1110px;top:295px;width:1px;height:41px;background:#c6c6c6;"></div>
<div class="r" style="left:1138px;top:295px;width:1px;height:41px;background:#c6c6c6;"></div>
<div class="r" style="left:1166px;top:295px;width:1px;height:41px;background:#c6c6c6;"></div>
<div class="r" style="left:1194px;top:295px;width:1px;height:41px;background:#c6c6c6;"></div>
<div class="r" style="left:1221px;top:295px;width:1px;height:41px;background:#c6c6c6;"></div>
<div class="r" style="left:1249px;top:295px;width:1px;height:41px;background:#c6c6c6;"></div>
<div class="r" style="left:1281px;top:295px;width:1px;height:41px;background:#c6c6c6;"></div>
<div class="r" style="left:1313px;top:295px;width:1px;height:41px;background:#c6c6c6;"></div>
<div class="r" style="left:1340px;top:295px;width:1px;height:41px;background:#c6c6c6;"></div>
<div class="r" style="left:1369px;top:295px;width:1px;height:41px;background:#c6c6c6;"></div>
<div class="r" style="left:1397px;top:295px;width:1px;height:41px;background:#c6c6c6;"></div>
<div class="r" style="left:18px;top:336px;width:1407px;height:1px;background:#c6c6c6;"></div>
<div class="t" style="left:22px;top:298.14px;font-size:12px;color:#4d4d4d;transform:scaleX(0.917);transform-origin:0 0;">N</div>
<div class="t" style="left:63px;top:298.14px;font-size:12px;color:#4d4d4d;transform:scaleX(0.917);transform-origin:0 0;">Сотрудник, занимаемых ставок</div>
<div class="t" style="left:63px;top:319.14px;font-size:12px;color:#4d4d4d;transform:scaleX(0.917);transform-origin:0 0;">Показатель</div>
<div class="t" style="left:326px;top:298.14px;font-size:12px;color:#4d4d4d;transform:scaleX(0.917);transform-origin:0 0;">Не работает</div>
<div class="t" style="left:397px;top:298.14px;font-size:12px;color:#4d4d4d;transform:scaleX(0.917);transform-origin:0 0;">Норма</div>
<div class="t" style="left:397px;top:319.14px;font-size:12px;color:#4d4d4d;transform:scaleX(0.917);transform-origin:0 0;">с откл.</div>
<div class="t" style="left:441px;top:298.14px;font-size:12px;color:#4d4d4d;transform:scaleX(0.917);transform-origin:0 0;">Итого</div>
<div class="t" style="left:480px;top:298.14px;font-size:12px;color:#4d4d4d;transform:scaleX(0.917);transform-origin:0 0;">с ... по...</div>
<div class="t" style="left:531px;top:298.14px;font-size:12px;color:#4d4d4d;transform:scaleX(0.917);transform-origin:0 0;">Подразде...</div>
<div class="t" style="left:531px;top:319.14px;font-size:12px;color:#4d4d4d;transform:scaleX(0.917);transform-origin:0 0;">Должность</div>
<div class="t" style="left:597px;top:298.14px;font-size:12px;color:#4d4d4d;width:24px;text-align:center;transform:scaleX(0.917);transform-origin:50% 0;">1</div>
<div class="t" style="left:597px;top:311.14px;font-size:12px;color:#4d4d4d;width:24px;text-align:center;transform:scaleX(0.917);transform-origin:50% 0;">ср</div>
<div class="t" style="left:621px;top:298.14px;font-size:12px;color:#4d4d4d;width:22px;text-align:center;transform:scaleX(0.917);transform-origin:50% 0;">2</div>
<div class="t" style="left:621px;top:311.14px;font-size:12px;color:#4d4d4d;width:22px;text-align:center;transform:scaleX(0.917);transform-origin:50% 0;">чт</div>
<div class="t" style="left:643px;top:298.59px;font-size:11.5px;color:#0000c8;font-weight:bold;width:26px;text-align:center;">3</div>
<div class="t" style="left:643px;top:311.59px;font-size:11.5px;color:#0000c8;font-weight:bold;width:26px;text-align:center;">пт</div>
<div class="t" style="left:669px;top:298.59px;font-size:11.5px;color:#a03000;font-weight:bold;width:27px;text-align:center;">4</div>
<div class="t" style="left:669px;top:311.59px;font-size:11.5px;color:#a03000;font-weight:bold;width:27px;text-align:center;">сб</div>
<div class="t" style="left:696px;top:298.59px;font-size:11.5px;color:#a03000;font-weight:bold;width:27px;text-align:center;">5</div>
<div class="t" style="left:696px;top:311.59px;font-size:11.5px;color:#a03000;font-weight:bold;width:27px;text-align:center;">вс</div>
<div class="t" style="left:723px;top:298.59px;font-size:11.5px;color:#a03000;font-weight:bold;width:26px;text-align:center;">6</div>
<div class="t" style="left:723px;top:311.59px;font-size:11.5px;color:#a03000;font-weight:bold;width:26px;text-align:center;">пн</div>
<div class="t" style="left:749px;top:298.14px;font-size:12px;color:#4d4d4d;width:23px;text-align:center;transform:scaleX(0.917);transform-origin:50% 0;">7</div>
<div class="t" style="left:749px;top:311.14px;font-size:12px;color:#4d4d4d;width:23px;text-align:center;transform:scaleX(0.917);transform-origin:50% 0;">вт</div>
<div class="t" style="left:772px;top:298.14px;font-size:12px;color:#4d4d4d;width:23px;text-align:center;transform:scaleX(0.917);transform-origin:50% 0;">8</div>
<div class="t" style="left:772px;top:311.14px;font-size:12px;color:#4d4d4d;width:23px;text-align:center;transform:scaleX(0.917);transform-origin:50% 0;">ср</div>
<div class="t" style="left:795px;top:298.14px;font-size:12px;color:#4d4d4d;width:22px;text-align:center;transform:scaleX(0.917);transform-origin:50% 0;">9</div>
<div class="t" style="left:795px;top:311.14px;font-size:12px;color:#4d4d4d;width:22px;text-align:center;transform:scaleX(0.917);transform-origin:50% 0;">чт</div>
<div class="t" style="left:817px;top:298.14px;font-size:12px;color:#4d4d4d;width:27px;text-align:center;transform:scaleX(0.917);transform-origin:50% 0;">10</div>
<div class="t" style="left:817px;top:311.14px;font-size:12px;color:#4d4d4d;width:27px;text-align:center;transform:scaleX(0.917);transform-origin:50% 0;">пт</div>
<div class="t" style="left:844px;top:298.59px;font-size:11.5px;color:#a03000;font-weight:bold;width:32px;text-align:center;">11</div>
<div class="t" style="left:844px;top:311.59px;font-size:11.5px;color:#a03000;font-weight:bold;width:32px;text-align:center;">сб</div>
<div class="t" style="left:876px;top:298.59px;font-size:11.5px;color:#a03000;font-weight:bold;width:32px;text-align:center;">12</div>
<div class="t" style="left:876px;top:311.59px;font-size:11.5px;color:#a03000;font-weight:bold;width:32px;text-align:center;">вс</div>
<div class="t" style="left:908px;top:298.14px;font-size:12px;color:#4d4d4d;width:29px;text-align:center;transform:scaleX(0.917);transform-origin:50% 0;">13</div>
<div class="t" style="left:908px;top:311.14px;font-size:12px;color:#4d4d4d;width:29px;text-align:center;transform:scaleX(0.917);transform-origin:50% 0;">пн</div>
<div class="t" style="left:937px;top:298.14px;font-size:12px;color:#4d4d4d;width:28px;text-align:center;transform:scaleX(0.917);transform-origin:50% 0;">14</div>
<div class="t" style="left:937px;top:311.14px;font-size:12px;color:#4d4d4d;width:28px;text-align:center;transform:scaleX(0.917);transform-origin:50% 0;">вт</div>
<div class="t" style="left:965px;top:298.14px;font-size:12px;color:#4d4d4d;width:27px;text-align:center;transform:scaleX(0.917);transform-origin:50% 0;">15</div>
<div class="t" style="left:965px;top:311.14px;font-size:12px;color:#4d4d4d;width:27px;text-align:center;transform:scaleX(0.917);transform-origin:50% 0;">ср</div>
<div class="t" style="left:992px;top:298.14px;font-size:12px;color:#4d4d4d;width:28px;text-align:center;transform:scaleX(0.917);transform-origin:50% 0;">16</div>
<div class="t" style="left:992px;top:311.14px;font-size:12px;color:#4d4d4d;width:28px;text-align:center;transform:scaleX(0.917);transform-origin:50% 0;">чт</div>
<div class="t" style="left:1020px;top:298.14px;font-size:12px;color:#4d4d4d;width:26px;text-align:center;transform:scaleX(0.917);transform-origin:50% 0;">17</div>
<div class="t" style="left:1020px;top:311.14px;font-size:12px;color:#4d4d4d;width:26px;text-align:center;transform:scaleX(0.917);transform-origin:50% 0;">пт</div>
<div class="t" style="left:1046px;top:298.59px;font-size:11.5px;color:#a03000;font-weight:bold;width:32px;text-align:center;">18</div>
<div class="t" style="left:1046px;top:311.59px;font-size:11.5px;color:#a03000;font-weight:bold;width:32px;text-align:center;">сб</div>
<div class="t" style="left:1078px;top:298.59px;font-size:11.5px;color:#a03000;font-weight:bold;width:32px;text-align:center;">19</div>
<div class="t" style="left:1078px;top:311.59px;font-size:11.5px;color:#a03000;font-weight:bold;width:32px;text-align:center;">вс</div>
<div class="t" style="left:1110px;top:298.14px;font-size:12px;color:#4d4d4d;width:28px;text-align:center;transform:scaleX(0.917);transform-origin:50% 0;">20</div>
<div class="t" style="left:1110px;top:311.14px;font-size:12px;color:#4d4d4d;width:28px;text-align:center;transform:scaleX(0.917);transform-origin:50% 0;">пн</div>
<div class="t" style="left:1138px;top:298.14px;font-size:12px;color:#4d4d4d;width:28px;text-align:center;transform:scaleX(0.917);transform-origin:50% 0;">21</div>
<div class="t" style="left:1138px;top:311.14px;font-size:12px;color:#4d4d4d;width:28px;text-align:center;transform:scaleX(0.917);transform-origin:50% 0;">вт</div>
<div class="t" style="left:1166px;top:298.14px;font-size:12px;color:#4d4d4d;width:28px;text-align:center;transform:scaleX(0.917);transform-origin:50% 0;">22</div>
<div class="t" style="left:1166px;top:311.14px;font-size:12px;color:#4d4d4d;width:28px;text-align:center;transform:scaleX(0.917);transform-origin:50% 0;">ср</div>
<div class="t" style="left:1194px;top:298.14px;font-size:12px;color:#4d4d4d;width:27px;text-align:center;transform:scaleX(0.917);transform-origin:50% 0;">23</div>
<div class="t" style="left:1194px;top:311.14px;font-size:12px;color:#4d4d4d;width:27px;text-align:center;transform:scaleX(0.917);transform-origin:50% 0;">чт</div>
<div class="t" style="left:1221px;top:298.14px;font-size:12px;color:#4d4d4d;width:28px;text-align:center;transform:scaleX(0.917);transform-origin:50% 0;">24</div>
<div class="t" style="left:1221px;top:311.14px;font-size:12px;color:#4d4d4d;width:28px;text-align:center;transform:scaleX(0.917);transform-origin:50% 0;">пт</div>
<div class="t" style="left:1249px;top:298.59px;font-size:11.5px;color:#a03000;font-weight:bold;width:32px;text-align:center;">25</div>
<div class="t" style="left:1249px;top:311.59px;font-size:11.5px;color:#a03000;font-weight:bold;width:32px;text-align:center;">сб</div>
<div class="t" style="left:1281px;top:298.59px;font-size:11.5px;color:#a03000;font-weight:bold;width:32px;text-align:center;">26</div>
<div class="t" style="left:1281px;top:311.59px;font-size:11.5px;color:#a03000;font-weight:bold;width:32px;text-align:center;">вс</div>
<div class="t" style="left:1313px;top:298.14px;font-size:12px;color:#4d4d4d;width:27px;text-align:center;transform:scaleX(0.917);transform-origin:50% 0;">27</div>
<div class="t" style="left:1313px;top:311.14px;font-size:12px;color:#4d4d4d;width:27px;text-align:center;transform:scaleX(0.917);transform-origin:50% 0;">пн</div>
<div class="t" style="left:1340px;top:298.14px;font-size:12px;color:#4d4d4d;width:29px;text-align:center;transform:scaleX(0.917);transform-origin:50% 0;">28</div>
<div class="t" style="left:1340px;top:311.14px;font-size:12px;color:#4d4d4d;width:29px;text-align:center;transform:scaleX(0.917);transform-origin:50% 0;">вт</div>
<div class="t" style="left:1369px;top:298.14px;font-size:12px;color:#4d4d4d;width:28px;text-align:center;transform:scaleX(0.917);transform-origin:50% 0;">29</div>
<div class="t" style="left:1369px;top:311.14px;font-size:12px;color:#4d4d4d;width:28px;text-align:center;transform:scaleX(0.917);transform-origin:50% 0;">ср</div>
<div class="t" style="left:1397px;top:298.14px;font-size:12px;color:#4d4d4d;width:28px;text-align:center;transform:scaleX(0.917);transform-origin:50% 0;">30</div>
<div class="t" style="left:1397px;top:311.14px;font-size:12px;color:#4d4d4d;width:28px;text-align:center;transform:scaleX(0.917);transform-origin:50% 0;">чт</div>
<div class="r" style="left:18px;top:374px;width:1407px;height:1px;background:#e6e6e6;"></div>
<div class="r" style="left:18px;top:338px;width:40px;height:35px;background:#fbeea5;"></div>
<div class="r" style="left:59px;top:338px;width:262px;height:17px;background:#fcf5d2;"></div>
<div class="r" style="left:59px;top:356px;width:262px;height:17px;background:#fcf5d2;"></div>
<div class="r" style="left:322px;top:338px;width:71px;height:35px;background:#fcf5d2;"></div>
<div class="r" style="left:394px;top:338px;width:43px;height:17px;background:#fcf5d2;"></div>
<div class="r" style="left:394px;top:356px;width:43px;height:17px;background:#fcf5d2;"></div>
<div class="r" style="left:438px;top:338px;width:38px;height:35px;background:#fcf5d2;"></div>
<div class="r" style="left:477px;top:338px;width:50px;height:35px;background:#fcf5d2;"></div>
<div class="r" style="left:528px;top:338px;width:69px;height:17px;background:#fcf5d2;"></div>
<div class="r" style="left:528px;top:356px;width:69px;height:17px;background:#fcf5d2;"></div>
<div class="r" style="left:598px;top:338px;width:23px;height:35px;background:#fcf5d2;"></div>
<div class="r" style="left:622px;top:338px;width:21px;height:35px;background:#fcf5d2;"></div>
<div class="r" style="left:644px;top:338px;width:25px;height:35px;background:#fcf5d2;"></div>
<div class="r" style="left:670px;top:338px;width:26px;height:35px;background:#fcf5d2;"></div>
<div class="r" style="left:697px;top:338px;width:26px;height:35px;background:#fcf5d2;"></div>
<div class="r" style="left:724px;top:338px;width:25px;height:35px;background:#fcf5d2;"></div>
<div class="r" style="left:750px;top:338px;width:22px;height:35px;background:#fcf5d2;"></div>
<div class="r" style="left:773px;top:338px;width:22px;height:35px;background:#fcf5d2;"></div>
<div class="r" style="left:796px;top:338px;width:21px;height:35px;background:#fcf5d2;"></div>
<div class="r" style="left:818px;top:338px;width:26px;height:35px;background:#fcf5d2;"></div>
<div class="r" style="left:845px;top:338px;width:31px;height:35px;background:#fcf5d2;"></div>
<div class="r" style="left:877px;top:338px;width:31px;height:35px;background:#fcf5d2;"></div>
<div class="r" style="left:909px;top:338px;width:28px;height:35px;background:#fcf5d2;"></div>
<div class="r" style="left:938px;top:338px;width:27px;height:35px;background:#fcf5d2;"></div>
<div class="r" style="left:966px;top:338px;width:26px;height:35px;background:#fcf5d2;"></div>
<div class="r" style="left:993px;top:338px;width:27px;height:35px;background:#fcf5d2;"></div>
<div class="r" style="left:1021px;top:338px;width:25px;height:35px;background:#fcf5d2;"></div>
<div class="r" style="left:1047px;top:338px;width:31px;height:35px;background:#fcf5d2;"></div>
<div class="r" style="left:1079px;top:338px;width:31px;height:35px;background:#fcf5d2;"></div>
<div class="r" style="left:1111px;top:338px;width:27px;height:35px;background:#fcf5d2;"></div>
<div class="r" style="left:1139px;top:338px;width:27px;height:35px;background:#fcf5d2;"></div>
<div class="r" style="left:1167px;top:338px;width:27px;height:35px;background:#fcf5d2;"></div>
<div class="r" style="left:1195px;top:338px;width:26px;height:35px;background:#fcf5d2;"></div>
<div class="r" style="left:1222px;top:338px;width:27px;height:35px;background:#fcf5d2;"></div>
<div class="r" style="left:1250px;top:338px;width:31px;height:35px;background:#fcf5d2;"></div>
<div class="r" style="left:1282px;top:338px;width:31px;height:35px;background:#fcf5d2;"></div>
<div class="r" style="left:1314px;top:338px;width:26px;height:35px;background:#fcf5d2;"></div>
<div class="r" style="left:1341px;top:338px;width:28px;height:35px;background:#fcf5d2;"></div>
<div class="r" style="left:1370px;top:338px;width:27px;height:35px;background:#fcf5d2;"></div>
<div class="r" style="left:1398px;top:338px;width:27px;height:35px;background:#fcf5d2;"></div>
<div class="r" style="left:476px;top:337px;width:1px;height:38px;background:#cfcfcf;"></div>
<div class="t" style="left:18px;top:340.14px;font-size:12px;color:#333;width:36px;text-align:right;transform:scaleX(0.917);transform-origin:100% 0;">1</div>
<div class="t" style="left:63px;top:340.14px;font-size:12px;color:#333;transform:scaleX(0.8940750000000001);transform-origin:0 0;">Гапонова Елена Васильевна (осн.) (Прин) (1,00),...</div>
<div class="t" style="left:63px;top:359.14px;font-size:12px;color:#333;transform:scaleX(0.917);transform-origin:0 0;">Количество явок</div>
<div class="r" style="left:327px;top:341px;width:13px;height:13px;background:#fff;border:1px solid #9a9a9a;border-radius:2px;"></div>
<div class="t" style="left:393px;top:340.14px;font-size:12px;color:#333;width:40px;text-align:right;transform:scaleX(0.917);transform-origin:100% 0;">167,...</div>
<div class="t" style="left:393px;top:359.14px;font-size:12px;color:#333;width:40px;text-align:right;transform:scaleX(0.917);transform-origin:100% 0;">167,...</div>
<div class="t" style="left:437px;top:340.14px;font-size:12px;color:#222;font-weight:bold;width:36px;text-align:right;transform:scaleX(0.93);transform-origin:100% 0;">16...</div>
<div class="t" style="left:481px;top:340.14px;font-size:12px;color:#333;transform:scaleX(0.917);transform-origin:0 0;">1-30</div>
<div class="t" style="left:531px;top:340.14px;font-size:12px;color:#333;transform:scaleX(0.917);transform-origin:0 0;">Отдел орг...</div>
<div class="t" style="left:531px;top:359.14px;font-size:12px;color:#333;transform:scaleX(0.917);transform-origin:0 0;">Специали...</div>
<div class="t" style="left:602px;top:340.14px;font-size:12px;color:#333;transform:scaleX(0.917);transform-origin:0 0;">8</div>
<div class="t" style="left:626px;top:340.14px;font-size:12px;color:#333;transform:scaleX(0.917);transform-origin:0 0;">8</div>
<div class="t" style="left:648px;top:340.14px;font-size:12px;color:#333;transform:scaleX(0.917);transform-origin:0 0;">7</div>
<div class="t" style="left:674px;top:340.14px;font-size:12px;color:#333;transform:scaleX(0.917);transform-origin:0 0;">В</div>
<div class="t" style="left:701px;top:340.14px;font-size:12px;color:#333;transform:scaleX(0.917);transform-origin:0 0;">В</div>
<div class="t" style="left:728px;top:340.14px;font-size:12px;color:#333;transform:scaleX(0.917);transform-origin:0 0;">В</div>
<div class="t" style="left:754px;top:340.14px;font-size:12px;color:#333;transform:scaleX(0.917);transform-origin:0 0;">8</div>
<div class="t" style="left:777px;top:340.14px;font-size:12px;color:#333;transform:scaleX(0.917);transform-origin:0 0;">8</div>
<div class="t" style="left:800px;top:340.14px;font-size:12px;color:#333;transform:scaleX(0.917);transform-origin:0 0;">8</div>
<div class="t" style="left:822px;top:340.14px;font-size:12px;color:#333;transform:scaleX(0.917);transform-origin:0 0;">8</div>
<div class="t" style="left:849px;top:340.14px;font-size:12px;color:#333;transform:scaleX(0.917);transform-origin:0 0;">В</div>
<div class="t" style="left:881px;top:340.14px;font-size:12px;color:#333;transform:scaleX(0.917);transform-origin:0 0;">В</div>
<div class="t" style="left:913px;top:340.14px;font-size:12px;color:#333;transform:scaleX(0.917);transform-origin:0 0;">8</div>
<div class="t" style="left:942px;top:340.14px;font-size:12px;color:#333;transform:scaleX(0.917);transform-origin:0 0;">8</div>
<div class="t" style="left:970px;top:340.14px;font-size:12px;color:#333;transform:scaleX(0.917);transform-origin:0 0;">8</div>
<div class="t" style="left:997px;top:340.14px;font-size:12px;color:#333;transform:scaleX(0.917);transform-origin:0 0;">8</div>
<div class="t" style="left:1025px;top:340.14px;font-size:12px;color:#333;transform:scaleX(0.917);transform-origin:0 0;">8</div>
<div class="t" style="left:1051px;top:340.14px;font-size:12px;color:#333;transform:scaleX(0.917);transform-origin:0 0;">В</div>
<div class="t" style="left:1083px;top:340.14px;font-size:12px;color:#333;transform:scaleX(0.917);transform-origin:0 0;">В</div>
<div class="t" style="left:1115px;top:340.14px;font-size:12px;color:#333;transform:scaleX(0.917);transform-origin:0 0;">8</div>
<div class="t" style="left:1143px;top:340.14px;font-size:12px;color:#333;transform:scaleX(0.917);transform-origin:0 0;">8</div>
<div class="t" style="left:1171px;top:340.14px;font-size:12px;color:#333;transform:scaleX(0.917);transform-origin:0 0;">8</div>
<div class="t" style="left:1199px;top:340.14px;font-size:12px;color:#333;transform:scaleX(0.917);transform-origin:0 0;">8</div>
<div class="t" style="left:1226px;top:340.14px;font-size:12px;color:#333;transform:scaleX(0.917);transform-origin:0 0;">8</div>
<div class="t" style="left:1254px;top:340.14px;font-size:12px;color:#333;transform:scaleX(0.917);transform-origin:0 0;">В</div>
<div class="t" style="left:1286px;top:340.14px;font-size:12px;color:#333;transform:scaleX(0.917);transform-origin:0 0;">В</div>
<div class="t" style="left:1318px;top:340.14px;font-size:12px;color:#333;transform:scaleX(0.917);transform-origin:0 0;">8</div>
<div class="t" style="left:1345px;top:340.14px;font-size:12px;color:#333;transform:scaleX(0.917);transform-origin:0 0;">8</div>
<div class="t" style="left:1374px;top:340.14px;font-size:12px;color:#333;transform:scaleX(0.917);transform-origin:0 0;">8</div>
<div class="t" style="left:1402px;top:340.14px;font-size:12px;color:#333;transform:scaleX(0.917);transform-origin:0 0;">8</div>
<div class="r" style="left:18px;top:412px;width:1407px;height:1px;background:#e6e6e6;"></div>
<div class="r" style="left:59px;top:375px;width:262px;height:37px;background:#dcdcdc;"></div>
<div class="r" style="left:598px;top:375px;width:24px;height:37px;background:#dcdcdc;"></div>
<div class="r" style="left:622px;top:375px;width:22px;height:37px;background:#dcdcdc;"></div>
<div class="r" style="left:644px;top:375px;width:26px;height:37px;background:#dcdcdc;"></div>
<div class="r" style="left:670px;top:375px;width:27px;height:37px;background:#dcdcdc;"></div>
<div class="r" style="left:697px;top:375px;width:27px;height:37px;background:#dcdcdc;"></div>
<div class="r" style="left:724px;top:375px;width:26px;height:37px;background:#dcdcdc;"></div>
<div class="r" style="left:750px;top:375px;width:23px;height:37px;background:#dcdcdc;"></div>
<div class="r" style="left:773px;top:375px;width:23px;height:37px;background:#dcdcdc;"></div>
<div class="r" style="left:796px;top:375px;width:22px;height:37px;background:#dcdcdc;"></div>
<div class="r" style="left:818px;top:375px;width:27px;height:37px;background:#dcdcdc;"></div>
<div class="r" style="left:845px;top:375px;width:32px;height:37px;background:#dcdcdc;"></div>
<div class="r" style="left:877px;top:375px;width:32px;height:37px;background:#dcdcdc;"></div>
<div class="r" style="left:909px;top:375px;width:29px;height:37px;background:#dcdcdc;"></div>
<div class="r" style="left:938px;top:375px;width:28px;height:37px;background:#dcdcdc;"></div>
<div class="r" style="left:966px;top:375px;width:27px;height:37px;background:#dcdcdc;"></div>
<div class="r" style="left:993px;top:375px;width:28px;height:37px;background:#b0dfe5;"></div>
<div class="r" style="left:1021px;top:375px;width:26px;height:37px;background:#b0dfe5;"></div>
<div class="r" style="left:1047px;top:375px;width:32px;height:37px;background:#b0dfe5;"></div>
<div class="r" style="left:1079px;top:375px;width:32px;height:37px;background:#b0dfe5;"></div>
<div class="r" style="left:1111px;top:375px;width:28px;height:37px;background:#b0dfe5;"></div>
<div class="r" style="left:1139px;top:375px;width:28px;height:37px;background:#b0dfe5;"></div>
<div class="r" style="left:1167px;top:375px;width:28px;height:37px;background:#b0dfe5;"></div>
<div class="r" style="left:1195px;top:375px;width:27px;height:37px;background:#b0dfe5;"></div>
<div class="r" style="left:1222px;top:375px;width:28px;height:37px;background:#b0dfe5;"></div>
<div class="r" style="left:1250px;top:375px;width:32px;height:37px;background:#b0dfe5;"></div>
<div class="r" style="left:1282px;top:375px;width:32px;height:37px;background:#b0dfe5;"></div>
<div class="r" style="left:1314px;top:375px;width:27px;height:37px;background:#b0dfe5;"></div>
<div class="r" style="left:1341px;top:375px;width:29px;height:37px;background:#b0dfe5;"></div>
<div class="r" style="left:1370px;top:375px;width:28px;height:37px;background:#b0dfe5;"></div>
<div class="r" style="left:1398px;top:375px;width:28px;height:37px;background:#b0dfe5;"></div>
<div class="r" style="left:476px;top:374px;width:1px;height:39px;background:#cfcfcf;"></div>
<div class="t" style="left:18px;top:378.14px;font-size:12px;color:#333;width:36px;text-align:right;transform:scaleX(0.917);transform-origin:100% 0;">2</div>
<div class="t" style="left:63px;top:378.14px;font-size:12px;color:#333;transform:scaleX(0.8940750000000001);transform-origin:0 0;">Катина Кристина Араратовна (внеш.) (Прин) (0,5...</div>
<div class="t" style="left:63px;top:397.14px;font-size:12px;color:#333;transform:scaleX(0.917);transform-origin:0 0;">Количество явок</div>
<div class="r" style="left:327px;top:378px;width:13px;height:13px;background:#fff;border:1px solid #9a9a9a;border-radius:2px;"></div>
<div class="t" style="left:393px;top:378.14px;font-size:12px;color:#333;width:40px;text-align:right;transform:scaleX(0.917);transform-origin:100% 0;">83,000</div>
<div class="t" style="left:393px;top:397.14px;font-size:12px;color:#333;width:40px;text-align:right;transform:scaleX(0.917);transform-origin:100% 0;">83,000</div>
<div class="t" style="left:437px;top:378.14px;font-size:12px;color:#222;font-weight:bold;width:36px;text-align:right;transform:scaleX(0.93);transform-origin:100% 0;">83,...</div>
<div class="t" style="left:481px;top:378.14px;font-size:12px;color:#333;transform:scaleX(0.917);transform-origin:0 0;">1-30</div>
<div class="t" style="left:531px;top:378.14px;font-size:12px;color:#333;transform:scaleX(0.917);transform-origin:0 0;">Отдел орг...</div>
<div class="t" style="left:531px;top:397.14px;font-size:12px;color:#333;transform:scaleX(0.917);transform-origin:0 0;">Специали...</div>
<div class="t" style="left:602px;top:378.14px;font-size:12px;color:#333;transform:scaleX(0.917);transform-origin:0 0;">4</div>
<div class="t" style="left:626px;top:378.14px;font-size:12px;color:#333;transform:scaleX(0.917);transform-origin:0 0;">4</div>
<div class="t" style="left:648px;top:378.14px;font-size:12px;color:#333;transform:scaleX(0.917);transform-origin:0 0;">3</div>
<div class="t" style="left:674px;top:378.14px;font-size:12px;color:#333;transform:scaleX(0.917);transform-origin:0 0;">В</div>
<div class="t" style="left:701px;top:378.14px;font-size:12px;color:#333;transform:scaleX(0.917);transform-origin:0 0;">В</div>
<div class="t" style="left:728px;top:378.14px;font-size:12px;color:#333;transform:scaleX(0.917);transform-origin:0 0;">В</div>
<div class="t" style="left:754px;top:378.14px;font-size:12px;color:#333;transform:scaleX(0.917);transform-origin:0 0;">4</div>
<div class="t" style="left:777px;top:378.14px;font-size:12px;color:#333;transform:scaleX(0.917);transform-origin:0 0;">4</div>
<div class="t" style="left:800px;top:378.14px;font-size:12px;color:#333;transform:scaleX(0.917);transform-origin:0 0;">4</div>
<div class="t" style="left:822px;top:378.14px;font-size:12px;color:#333;transform:scaleX(0.917);transform-origin:0 0;">4</div>
<div class="t" style="left:849px;top:378.14px;font-size:12px;color:#333;transform:scaleX(0.917);transform-origin:0 0;">В</div>
<div class="t" style="left:881px;top:378.14px;font-size:12px;color:#333;transform:scaleX(0.917);transform-origin:0 0;">В</div>
<div class="t" style="left:913px;top:378.14px;font-size:12px;color:#333;transform:scaleX(0.917);transform-origin:0 0;">4</div>
<div class="t" style="left:942px;top:378.14px;font-size:12px;color:#333;transform:scaleX(0.917);transform-origin:0 0;">4</div>
<div class="t" style="left:970px;top:378.14px;font-size:12px;color:#333;transform:scaleX(0.917);transform-origin:0 0;">4</div>
<div class="t" style="left:997px;top:378.14px;font-size:12px;color:#333;transform:scaleX(0.917);transform-origin:0 0;">4</div>
<div class="t" style="left:1025px;top:378.14px;font-size:12px;color:#333;transform:scaleX(0.917);transform-origin:0 0;">4</div>
<div class="t" style="left:1051px;top:378.14px;font-size:12px;color:#333;transform:scaleX(0.917);transform-origin:0 0;">В</div>
<div class="t" style="left:1083px;top:378.14px;font-size:12px;color:#333;transform:scaleX(0.917);transform-origin:0 0;">В</div>
<div class="t" style="left:1115px;top:378.14px;font-size:12px;color:#333;transform:scaleX(0.917);transform-origin:0 0;">4</div>
<div class="t" style="left:1143px;top:378.14px;font-size:12px;color:#333;transform:scaleX(0.917);transform-origin:0 0;">4</div>
<div class="t" style="left:1171px;top:378.14px;font-size:12px;color:#333;transform:scaleX(0.917);transform-origin:0 0;">4</div>
<div class="t" style="left:1199px;top:378.14px;font-size:12px;color:#333;transform:scaleX(0.917);transform-origin:0 0;">4</div>
<div class="t" style="left:1226px;top:378.14px;font-size:12px;color:#333;transform:scaleX(0.917);transform-origin:0 0;">4</div>
<div class="t" style="left:1254px;top:378.14px;font-size:12px;color:#333;transform:scaleX(0.917);transform-origin:0 0;">В</div>
<div class="t" style="left:1286px;top:378.14px;font-size:12px;color:#333;transform:scaleX(0.917);transform-origin:0 0;">В</div>
<div class="t" style="left:1318px;top:378.14px;font-size:12px;color:#333;transform:scaleX(0.917);transform-origin:0 0;">4</div>
<div class="t" style="left:1345px;top:378.14px;font-size:12px;color:#333;transform:scaleX(0.917);transform-origin:0 0;">4</div>
<div class="t" style="left:1374px;top:378.14px;font-size:12px;color:#333;transform:scaleX(0.917);transform-origin:0 0;">4</div>
<div class="t" style="left:1402px;top:378.14px;font-size:12px;color:#333;transform:scaleX(0.917);transform-origin:0 0;">4</div>
<div class="r" style="left:18px;top:450px;width:1407px;height:1px;background:#e6e6e6;"></div>
<div class="r" style="left:59px;top:413px;width:262px;height:37px;background:#dcdcdc;"></div>
<div class="r" style="left:598px;top:413px;width:24px;height:37px;background:#dcdcdc;"></div>
<div class="r" style="left:622px;top:413px;width:22px;height:37px;background:#dcdcdc;"></div>
<div class="r" style="left:644px;top:413px;width:26px;height:37px;background:#dcdcdc;"></div>
<div class="r" style="left:670px;top:413px;width:27px;height:37px;background:#dcdcdc;"></div>
<div class="r" style="left:697px;top:413px;width:27px;height:37px;background:#dcdcdc;"></div>
<div class="r" style="left:724px;top:413px;width:26px;height:37px;background:#dcdcdc;"></div>
<div class="r" style="left:750px;top:413px;width:23px;height:37px;background:#dcdcdc;"></div>
<div class="r" style="left:773px;top:413px;width:23px;height:37px;background:#dcdcdc;"></div>
<div class="r" style="left:796px;top:413px;width:22px;height:37px;background:#dcdcdc;"></div>
<div class="r" style="left:818px;top:413px;width:27px;height:37px;background:#dcdcdc;"></div>
<div class="r" style="left:845px;top:413px;width:32px;height:37px;background:#dcdcdc;"></div>
<div class="r" style="left:877px;top:413px;width:32px;height:37px;background:#dcdcdc;"></div>
<div class="r" style="left:909px;top:413px;width:29px;height:37px;background:#dcdcdc;"></div>
<div class="r" style="left:938px;top:413px;width:28px;height:37px;background:#dcdcdc;"></div>
<div class="r" style="left:966px;top:413px;width:27px;height:37px;background:#dcdcdc;"></div>
<div class="r" style="left:993px;top:413px;width:28px;height:37px;background:#b0dfe5;"></div>
<div class="r" style="left:1021px;top:413px;width:26px;height:37px;background:#b0dfe5;"></div>
<div class="r" style="left:1047px;top:413px;width:32px;height:37px;background:#ffff00;"></div>
<div class="r" style="left:1079px;top:413px;width:32px;height:37px;background:#ffff00;"></div>
<div class="r" style="left:1111px;top:413px;width:28px;height:37px;background:#b0dfe5;"></div>
<div class="r" style="left:1139px;top:413px;width:28px;height:37px;background:#b0dfe5;"></div>
<div class="r" style="left:1167px;top:413px;width:28px;height:37px;background:#ffff00;"></div>
<div class="r" style="left:1195px;top:413px;width:27px;height:37px;background:#ffff00;"></div>
<div class="r" style="left:1222px;top:413px;width:28px;height:37px;background:#b0dfe5;"></div>
<div class="r" style="left:1250px;top:413px;width:32px;height:37px;background:#b0dfe5;"></div>
<div class="r" style="left:1282px;top:413px;width:32px;height:37px;background:#ffff00;"></div>
<div class="r" style="left:1314px;top:413px;width:27px;height:37px;background:#ffff00;"></div>
<div class="r" style="left:1341px;top:413px;width:29px;height:37px;background:#b0dfe5;"></div>
<div class="r" style="left:476px;top:412px;width:1px;height:39px;background:#cfcfcf;"></div>
<div class="t" style="left:18px;top:416.14px;font-size:12px;color:#333;width:36px;text-align:right;transform:scaleX(0.917);transform-origin:100% 0;">3</div>
<div class="t" style="left:63px;top:416.14px;font-size:12px;color:#333;transform:scaleX(0.8940750000000001);transform-origin:0 0;">Мащенок Юлия Владимировна (осн.) (Прин) (1,0...</div>
<div class="t" style="left:63px;top:435.14px;font-size:12px;color:#333;transform:scaleX(0.917);transform-origin:0 0;">Количество явок</div>
<div class="r" style="left:327px;top:416px;width:13px;height:13px;background:#fff;border:1px solid #9a9a9a;border-radius:2px;"></div>
<div class="t" style="left:393px;top:416.14px;font-size:12px;color:#333;width:40px;text-align:right;transform:scaleX(0.917);transform-origin:100% 0;">167,...</div>
<div class="t" style="left:393px;top:435.14px;font-size:12px;color:#333;width:40px;text-align:right;transform:scaleX(0.917);transform-origin:100% 0;">167,...</div>
<div class="t" style="left:437px;top:416.14px;font-size:12px;color:#222;font-weight:bold;width:36px;text-align:right;transform:scaleX(0.93);transform-origin:100% 0;">16...</div>
<div class="t" style="left:481px;top:416.14px;font-size:12px;color:#333;transform:scaleX(0.917);transform-origin:0 0;">1-30</div>
<div class="t" style="left:531px;top:416.14px;font-size:12px;color:#333;transform:scaleX(0.917);transform-origin:0 0;">Отдел орг...</div>
<div class="t" style="left:531px;top:435.14px;font-size:12px;color:#333;transform:scaleX(0.917);transform-origin:0 0;">Менеджер</div>
<div class="t" style="left:602px;top:416.14px;font-size:12px;color:#333;transform:scaleX(0.917);transform-origin:0 0;">12</div>
<div class="t" style="left:626px;top:416.14px;font-size:12px;color:#333;transform:scaleX(0.917);transform-origin:0 0;">4</div>
<div class="t" style="left:648px;top:416.14px;font-size:12px;color:#333;transform:scaleX(0.917);transform-origin:0 0;">8</div>
<div class="t" style="left:674px;top:416.14px;font-size:12px;color:#333;transform:scaleX(0.917);transform-origin:0 0;">В</div>
<div class="t" style="left:701px;top:416.14px;font-size:12px;color:#333;transform:scaleX(0.917);transform-origin:0 0;">12</div>
<div class="t" style="left:728px;top:416.14px;font-size:12px;color:#333;transform:scaleX(0.917);transform-origin:0 0;">4</div>
<div class="t" style="left:754px;top:416.14px;font-size:12px;color:#333;transform:scaleX(0.917);transform-origin:0 0;">8</div>
<div class="t" style="left:777px;top:416.14px;font-size:12px;color:#333;transform:scaleX(0.917);transform-origin:0 0;">В</div>
<div class="t" style="left:800px;top:416.14px;font-size:12px;color:#333;transform:scaleX(0.917);transform-origin:0 0;">12</div>
<div class="t" style="left:822px;top:416.14px;font-size:12px;color:#333;transform:scaleX(0.917);transform-origin:0 0;">4</div>
<div class="t" style="left:849px;top:416.14px;font-size:12px;color:#333;transform:scaleX(0.917);transform-origin:0 0;">8</div>
<div class="t" style="left:881px;top:416.14px;font-size:12px;color:#333;transform:scaleX(0.917);transform-origin:0 0;">В</div>
<div class="t" style="left:913px;top:416.14px;font-size:12px;color:#333;transform:scaleX(0.917);transform-origin:0 0;">12</div>
<div class="t" style="left:942px;top:416.14px;font-size:12px;color:#333;transform:scaleX(0.917);transform-origin:0 0;">4</div>
<div class="t" style="left:970px;top:416.14px;font-size:12px;color:#333;transform:scaleX(0.917);transform-origin:0 0;">8</div>
<div class="t" style="left:997px;top:416.14px;font-size:12px;color:#333;transform:scaleX(0.917);transform-origin:0 0;">В</div>
<div class="t" style="left:1025px;top:416.14px;font-size:12px;color:#333;transform:scaleX(0.917);transform-origin:0 0;">12</div>
<div class="t" style="left:1051px;top:416.14px;font-size:12px;color:#333;transform:scaleX(0.917);transform-origin:0 0;">4</div>
<div class="t" style="left:1083px;top:416.14px;font-size:12px;color:#333;transform:scaleX(0.917);transform-origin:0 0;">8</div>
<div class="t" style="left:1115px;top:416.14px;font-size:12px;color:#333;transform:scaleX(0.917);transform-origin:0 0;">В</div>
<div class="t" style="left:1143px;top:416.14px;font-size:12px;color:#333;transform:scaleX(0.917);transform-origin:0 0;">12</div>
<div class="t" style="left:1171px;top:416.14px;font-size:12px;color:#333;transform:scaleX(0.917);transform-origin:0 0;">4</div>
<div class="t" style="left:1199px;top:416.14px;font-size:12px;color:#333;transform:scaleX(0.917);transform-origin:0 0;">8</div>
<div class="t" style="left:1226px;top:416.14px;font-size:12px;color:#333;transform:scaleX(0.917);transform-origin:0 0;">В</div>
<div class="t" style="left:1254px;top:416.14px;font-size:12px;color:#333;transform:scaleX(0.917);transform-origin:0 0;">12</div>
<div class="t" style="left:1286px;top:416.14px;font-size:12px;color:#333;transform:scaleX(0.917);transform-origin:0 0;">4</div>
<div class="t" style="left:1318px;top:416.14px;font-size:12px;color:#333;transform:scaleX(0.917);transform-origin:0 0;">7</div>
<div class="t" style="left:1345px;top:416.14px;font-size:12px;color:#333;transform:scaleX(0.917);transform-origin:0 0;">В</div>
<div class="r" style="left:18px;top:469px;width:1407px;height:1px;background:#e6e6e6;"></div>
<div class="r" style="left:59px;top:451px;width:262px;height:18px;background:#dcdcdc;"></div>
<div class="r" style="left:598px;top:451px;width:24px;height:18px;background:#dcdcdc;"></div>
<div class="r" style="left:622px;top:451px;width:22px;height:18px;background:#dcdcdc;"></div>
<div class="r" style="left:644px;top:451px;width:26px;height:18px;background:#dcdcdc;"></div>
<div class="r" style="left:670px;top:451px;width:27px;height:18px;background:#dcdcdc;"></div>
<div class="r" style="left:697px;top:451px;width:27px;height:18px;background:#dcdcdc;"></div>
<div class="r" style="left:724px;top:451px;width:26px;height:18px;background:#dcdcdc;"></div>
<div class="r" style="left:750px;top:451px;width:23px;height:18px;background:#dcdcdc;"></div>
<div class="r" style="left:773px;top:451px;width:23px;height:18px;background:#dcdcdc;"></div>
<div class="r" style="left:796px;top:451px;width:22px;height:18px;background:#dcdcdc;"></div>
<div class="r" style="left:818px;top:451px;width:27px;height:18px;background:#dcdcdc;"></div>
<div class="r" style="left:845px;top:451px;width:32px;height:18px;background:#dcdcdc;"></div>
<div class="r" style="left:877px;top:451px;width:32px;height:18px;background:#dcdcdc;"></div>
<div class="r" style="left:909px;top:451px;width:29px;height:18px;background:#dcdcdc;"></div>
<div class="r" style="left:938px;top:451px;width:28px;height:18px;background:#dcdcdc;"></div>
<div class="r" style="left:966px;top:451px;width:27px;height:18px;background:#dcdcdc;"></div>
<div class="r" style="left:1047px;top:451px;width:32px;height:18px;background:#b0dfe5;"></div>
<div class="r" style="left:1079px;top:451px;width:32px;height:18px;background:#b0dfe5;"></div>
<div class="r" style="left:1167px;top:451px;width:28px;height:18px;background:#b0dfe5;"></div>
<div class="r" style="left:1195px;top:451px;width:27px;height:18px;background:#b0dfe5;"></div>
<div class="r" style="left:1282px;top:451px;width:32px;height:18px;background:#b0dfe5;"></div>
<div class="r" style="left:1314px;top:451px;width:27px;height:18px;background:#b0dfe5;"></div>
<div class="r" style="left:476px;top:450px;width:1px;height:20px;background:#cfcfcf;"></div>
<div class="t" style="left:18px;top:454.14px;font-size:12px;color:#333;width:36px;text-align:right;transform:scaleX(0.917);transform-origin:100% 0;">4</div>
<div class="t" style="left:63px;top:454.14px;font-size:12px;color:#333;transform:scaleX(0.8940750000000001);transform-origin:0 0;">Часов ночных</div>
<div class="r" style="left:327px;top:454px;width:13px;height:13px;background:#fff;border:1px solid #9a9a9a;border-radius:2px;"></div>
<div class="t" style="left:437px;top:454.14px;font-size:12px;color:#222;font-weight:bold;width:36px;text-align:right;transform:scaleX(0.93);transform-origin:100% 0;">56,...</div>
<div class="t" style="left:481px;top:454.14px;font-size:12px;color:#333;transform:scaleX(0.917);transform-origin:0 0;">1-30</div>
<div class="t" style="left:531px;top:454.14px;font-size:12px;color:#333;transform:scaleX(0.917);transform-origin:0 0;">Менеджер</div>
<div class="t" style="left:626px;top:454.14px;font-size:12px;color:#333;transform:scaleX(0.917);transform-origin:0 0;">2</div>
<div class="t" style="left:648px;top:454.14px;font-size:12px;color:#333;transform:scaleX(0.917);transform-origin:0 0;">6</div>
<div class="t" style="left:728px;top:454.14px;font-size:12px;color:#333;transform:scaleX(0.917);transform-origin:0 0;">2</div>
<div class="t" style="left:754px;top:454.14px;font-size:12px;color:#333;transform:scaleX(0.917);transform-origin:0 0;">6</div>
<div class="t" style="left:822px;top:454.14px;font-size:12px;color:#333;transform:scaleX(0.917);transform-origin:0 0;">2</div>
<div class="t" style="left:849px;top:454.14px;font-size:12px;color:#333;transform:scaleX(0.917);transform-origin:0 0;">6</div>
<div class="t" style="left:942px;top:454.14px;font-size:12px;color:#333;transform:scaleX(0.917);transform-origin:0 0;">2</div>
<div class="t" style="left:970px;top:454.14px;font-size:12px;color:#333;transform:scaleX(0.917);transform-origin:0 0;">6</div>
<div class="t" style="left:1051px;top:454.14px;font-size:12px;color:#333;transform:scaleX(0.917);transform-origin:0 0;">2</div>
<div class="t" style="left:1083px;top:454.14px;font-size:12px;color:#333;transform:scaleX(0.917);transform-origin:0 0;">6</div>
<div class="t" style="left:1171px;top:454.14px;font-size:12px;color:#333;transform:scaleX(0.917);transform-origin:0 0;">2</div>
<div class="t" style="left:1199px;top:454.14px;font-size:12px;color:#333;transform:scaleX(0.917);transform-origin:0 0;">6</div>
<div class="t" style="left:1286px;top:454.14px;font-size:12px;color:#333;transform:scaleX(0.917);transform-origin:0 0;">2</div>
<div class="t" style="left:1318px;top:454.14px;font-size:12px;color:#333;transform:scaleX(0.917);transform-origin:0 0;">6</div>
<div class="r" style="left:18px;top:507px;width:1407px;height:1px;background:#e6e6e6;"></div>
<div class="r" style="left:59px;top:470px;width:262px;height:37px;background:#dcdcdc;"></div>
<div class="r" style="left:598px;top:470px;width:24px;height:37px;background:#dcdcdc;"></div>
<div class="r" style="left:622px;top:470px;width:22px;height:37px;background:#dcdcdc;"></div>
<div class="r" style="left:644px;top:470px;width:26px;height:37px;background:#dcdcdc;"></div>
<div class="r" style="left:670px;top:470px;width:27px;height:37px;background:#dcdcdc;"></div>
<div class="r" style="left:697px;top:470px;width:27px;height:37px;background:#dcdcdc;"></div>
<div class="r" style="left:724px;top:470px;width:26px;height:37px;background:#dcdcdc;"></div>
<div class="r" style="left:750px;top:470px;width:23px;height:37px;background:#dcdcdc;"></div>
<div class="r" style="left:773px;top:470px;width:23px;height:37px;background:#dcdcdc;"></div>
<div class="r" style="left:796px;top:470px;width:22px;height:37px;background:#dcdcdc;"></div>
<div class="r" style="left:818px;top:470px;width:27px;height:37px;background:#dcdcdc;"></div>
<div class="r" style="left:845px;top:470px;width:32px;height:37px;background:#dcdcdc;"></div>
<div class="r" style="left:877px;top:470px;width:32px;height:37px;background:#dcdcdc;"></div>
<div class="r" style="left:909px;top:470px;width:29px;height:37px;background:#dcdcdc;"></div>
<div class="r" style="left:938px;top:470px;width:28px;height:37px;background:#dcdcdc;"></div>
<div class="r" style="left:966px;top:470px;width:27px;height:37px;background:#dcdcdc;"></div>
<div class="r" style="left:993px;top:470px;width:28px;height:37px;background:#b0dfe5;"></div>
<div class="r" style="left:1021px;top:470px;width:26px;height:37px;background:#b0dfe5;"></div>
<div class="r" style="left:1047px;top:470px;width:32px;height:37px;background:#b0dfe5;"></div>
<div class="r" style="left:1079px;top:470px;width:32px;height:37px;background:#b0dfe5;"></div>
<div class="r" style="left:1111px;top:470px;width:28px;height:37px;background:#b0dfe5;"></div>
<div class="r" style="left:1139px;top:470px;width:28px;height:37px;background:#b0dfe5;"></div>
<div class="r" style="left:1167px;top:470px;width:28px;height:37px;background:#b0dfe5;"></div>
<div class="r" style="left:1195px;top:470px;width:27px;height:37px;background:#b0dfe5;"></div>
<div class="r" style="left:1222px;top:470px;width:28px;height:37px;background:#b0dfe5;"></div>
<div class="r" style="left:1250px;top:470px;width:32px;height:37px;background:#b0dfe5;"></div>
<div class="r" style="left:1282px;top:470px;width:32px;height:37px;background:#b0dfe5;"></div>
<div class="r" style="left:1314px;top:470px;width:27px;height:37px;background:#b0dfe5;"></div>
<div class="r" style="left:1341px;top:470px;width:29px;height:37px;background:#b0dfe5;"></div>
<div class="r" style="left:1370px;top:470px;width:28px;height:37px;background:#b0dfe5;"></div>
<div class="r" style="left:1398px;top:470px;width:28px;height:37px;background:#b0dfe5;"></div>
<div class="r" style="left:476px;top:469px;width:1px;height:39px;background:#cfcfcf;"></div>
<div class="t" style="left:18px;top:473.14px;font-size:12px;color:#333;width:36px;text-align:right;transform:scaleX(0.917);transform-origin:100% 0;">5</div>
<div class="t" style="left:63px;top:473.14px;font-size:12px;color:#333;transform:scaleX(0.8940750000000001);transform-origin:0 0;">Мироненко Юлия Валерьевна (осн.) (Прин) (1,00...</div>
<div class="t" style="left:63px;top:492.14px;font-size:12px;color:#333;transform:scaleX(0.917);transform-origin:0 0;">Количество явок</div>
<div class="r" style="left:327px;top:473px;width:13px;height:13px;background:#fff;border:1px solid #9a9a9a;border-radius:2px;"></div>
<div class="t" style="left:393px;top:473.14px;font-size:12px;color:#333;width:40px;text-align:right;transform:scaleX(0.917);transform-origin:100% 0;">167,...</div>
<div class="t" style="left:393px;top:492.14px;font-size:12px;color:#333;width:40px;text-align:right;transform:scaleX(0.917);transform-origin:100% 0;">143,...</div>
<div class="t" style="left:437px;top:473.14px;font-size:12px;color:#222;font-weight:bold;width:36px;text-align:right;transform:scaleX(0.93);transform-origin:100% 0;">14...</div>
<div class="t" style="left:481px;top:473.14px;font-size:12px;color:#333;transform:scaleX(0.917);transform-origin:0 0;">1-30</div>
<div class="t" style="left:531px;top:473.14px;font-size:12px;color:#333;transform:scaleX(0.917);transform-origin:0 0;">Отдел орг...</div>
<div class="t" style="left:531px;top:492.14px;font-size:12px;color:#333;transform:scaleX(0.917);transform-origin:0 0;">Начальни...</div>
<div class="t" style="left:602px;top:473.14px;font-size:12px;color:#333;transform:scaleX(0.917);transform-origin:0 0;">8</div>
<div class="t" style="left:626px;top:473.14px;font-size:12px;color:#333;transform:scaleX(0.917);transform-origin:0 0;">8</div>
<div class="t" style="left:648px;top:473.14px;font-size:12px;color:#333;transform:scaleX(0.917);transform-origin:0 0;">7</div>
<div class="t" style="left:674px;top:473.14px;font-size:12px;color:#333;transform:scaleX(0.917);transform-origin:0 0;">В</div>
<div class="t" style="left:701px;top:473.14px;font-size:12px;color:#333;transform:scaleX(0.917);transform-origin:0 0;">В</div>
<div class="t" style="left:728px;top:473.14px;font-size:12px;color:#333;transform:scaleX(0.917);transform-origin:0 0;">В</div>
<div class="t" style="left:754px;top:473.14px;font-size:12px;color:#333;transform:scaleX(0.917);transform-origin:0 0;">8</div>
<div class="t" style="left:777px;top:473.14px;font-size:12px;color:#333;transform:scaleX(0.917);transform-origin:0 0;">8</div>
<div class="t" style="left:800px;top:473.14px;font-size:12px;color:#333;transform:scaleX(0.917);transform-origin:0 0;">8</div>
<div class="t" style="left:822px;top:473.14px;font-size:12px;color:#333;transform:scaleX(0.917);transform-origin:0 0;">8</div>
<div class="t" style="left:849px;top:473.14px;font-size:12px;color:#333;transform:scaleX(0.917);transform-origin:0 0;">В</div>
<div class="t" style="left:881px;top:473.14px;font-size:12px;color:#333;transform:scaleX(0.917);transform-origin:0 0;">В</div>
<div class="t" style="left:913px;top:473.14px;font-size:12px;color:#333;transform:scaleX(0.917);transform-origin:0 0;">К</div>
<div class="t" style="left:942px;top:473.14px;font-size:12px;color:#333;transform:scaleX(0.917);transform-origin:0 0;">К</div>
<div class="t" style="left:970px;top:473.14px;font-size:12px;color:#333;transform:scaleX(0.917);transform-origin:0 0;">К</div>
<div class="t" style="left:997px;top:473.14px;font-size:12px;color:#333;transform:scaleX(0.917);transform-origin:0 0;">8</div>
<div class="t" style="left:1025px;top:473.14px;font-size:12px;color:#333;transform:scaleX(0.917);transform-origin:0 0;">8</div>
<div class="t" style="left:1051px;top:473.14px;font-size:12px;color:#333;transform:scaleX(0.917);transform-origin:0 0;">В</div>
<div class="t" style="left:1083px;top:473.14px;font-size:12px;color:#333;transform:scaleX(0.917);transform-origin:0 0;">В</div>
<div class="t" style="left:1115px;top:473.14px;font-size:12px;color:#333;transform:scaleX(0.917);transform-origin:0 0;">8</div>
<div class="t" style="left:1143px;top:473.14px;font-size:12px;color:#333;transform:scaleX(0.917);transform-origin:0 0;">8</div>
<div class="t" style="left:1171px;top:473.14px;font-size:12px;color:#333;transform:scaleX(0.917);transform-origin:0 0;">8</div>
<div class="t" style="left:1199px;top:473.14px;font-size:12px;color:#333;transform:scaleX(0.917);transform-origin:0 0;">8</div>
<div class="t" style="left:1226px;top:473.14px;font-size:12px;color:#333;transform:scaleX(0.917);transform-origin:0 0;">8</div>
<div class="t" style="left:1254px;top:473.14px;font-size:12px;color:#333;transform:scaleX(0.917);transform-origin:0 0;">В</div>
<div class="t" style="left:1286px;top:473.14px;font-size:12px;color:#333;transform:scaleX(0.917);transform-origin:0 0;">В</div>
<div class="t" style="left:1318px;top:473.14px;font-size:12px;color:#333;transform:scaleX(0.917);transform-origin:0 0;">8</div>
<div class="t" style="left:1345px;top:473.14px;font-size:12px;color:#333;transform:scaleX(0.917);transform-origin:0 0;">8</div>
<div class="t" style="left:1374px;top:473.14px;font-size:12px;color:#333;transform:scaleX(0.917);transform-origin:0 0;">8</div>
<div class="t" style="left:1402px;top:473.14px;font-size:12px;color:#333;transform:scaleX(0.917);transform-origin:0 0;">8</div>
<div class="r" style="left:18px;top:545px;width:1407px;height:1px;background:#e6e6e6;"></div>
<div class="r" style="left:59px;top:508px;width:262px;height:37px;background:#dcdcdc;"></div>
<div class="r" style="left:598px;top:508px;width:24px;height:37px;background:#dcdcdc;"></div>
<div class="r" style="left:622px;top:508px;width:22px;height:37px;background:#dcdcdc;"></div>
<div class="r" style="left:644px;top:508px;width:26px;height:37px;background:#dcdcdc;"></div>
<div class="r" style="left:670px;top:508px;width:27px;height:37px;background:#dcdcdc;"></div>
<div class="r" style="left:697px;top:508px;width:27px;height:37px;background:#dcdcdc;"></div>
<div class="r" style="left:724px;top:508px;width:26px;height:37px;background:#dcdcdc;"></div>
<div class="r" style="left:750px;top:508px;width:23px;height:37px;background:#dcdcdc;"></div>
<div class="r" style="left:773px;top:508px;width:23px;height:37px;background:#dcdcdc;"></div>
<div class="r" style="left:796px;top:508px;width:22px;height:37px;background:#dcdcdc;"></div>
<div class="r" style="left:818px;top:508px;width:27px;height:37px;background:#dcdcdc;"></div>
<div class="r" style="left:845px;top:508px;width:32px;height:37px;background:#dcdcdc;"></div>
<div class="r" style="left:877px;top:508px;width:32px;height:37px;background:#dcdcdc;"></div>
<div class="r" style="left:909px;top:508px;width:29px;height:37px;background:#dcdcdc;"></div>
<div class="r" style="left:938px;top:508px;width:28px;height:37px;background:#dcdcdc;"></div>
<div class="r" style="left:966px;top:508px;width:27px;height:37px;background:#dcdcdc;"></div>
<div class="r" style="left:993px;top:508px;width:28px;height:37px;background:#b0dfe5;"></div>
<div class="r" style="left:1021px;top:508px;width:26px;height:37px;background:#b0dfe5;"></div>
<div class="r" style="left:1047px;top:508px;width:32px;height:37px;background:#b0dfe5;"></div>
<div class="r" style="left:1079px;top:508px;width:32px;height:37px;background:#b0dfe5;"></div>
<div class="r" style="left:1111px;top:508px;width:28px;height:37px;background:#b0dfe5;"></div>
<div class="r" style="left:1139px;top:508px;width:28px;height:37px;background:#b0dfe5;"></div>
<div class="r" style="left:1167px;top:508px;width:28px;height:37px;background:#b0dfe5;"></div>
<div class="r" style="left:1195px;top:508px;width:27px;height:37px;background:#b0dfe5;"></div>
<div class="r" style="left:1222px;top:508px;width:28px;height:37px;background:#b0dfe5;"></div>
<div class="r" style="left:1250px;top:508px;width:32px;height:37px;background:#b0dfe5;"></div>
<div class="r" style="left:1282px;top:508px;width:32px;height:37px;background:#b0dfe5;"></div>
<div class="r" style="left:1314px;top:508px;width:27px;height:37px;background:#b0dfe5;"></div>
<div class="r" style="left:1341px;top:508px;width:29px;height:37px;background:#b0dfe5;"></div>
<div class="r" style="left:1370px;top:508px;width:28px;height:37px;background:#b0dfe5;"></div>
<div class="r" style="left:1398px;top:508px;width:28px;height:37px;background:#b0dfe5;"></div>
<div class="r" style="left:476px;top:507px;width:1px;height:39px;background:#cfcfcf;"></div>
<div class="t" style="left:18px;top:511.14px;font-size:12px;color:#333;width:36px;text-align:right;transform:scaleX(0.917);transform-origin:100% 0;">6</div>
<div class="t" style="left:63px;top:511.14px;font-size:12px;color:#333;transform:scaleX(0.8940750000000001);transform-origin:0 0;">Модзелевская Марина Степановна (вн. совм.) (...</div>
<div class="t" style="left:63px;top:530.14px;font-size:12px;color:#333;transform:scaleX(0.917);transform-origin:0 0;">Количество явок</div>
<div class="r" style="left:327px;top:511px;width:13px;height:13px;background:#fff;border:1px solid #9a9a9a;border-radius:2px;"></div>
<div class="t" style="left:393px;top:511.14px;font-size:12px;color:#333;width:40px;text-align:right;transform:scaleX(0.917);transform-origin:100% 0;">41,000</div>
<div class="t" style="left:393px;top:530.14px;font-size:12px;color:#333;width:40px;text-align:right;transform:scaleX(0.917);transform-origin:100% 0;">41,000</div>
<div class="t" style="left:437px;top:511.14px;font-size:12px;color:#222;font-weight:bold;width:36px;text-align:right;transform:scaleX(0.93);transform-origin:100% 0;">41,...</div>
<div class="t" style="left:481px;top:511.14px;font-size:12px;color:#333;transform:scaleX(0.917);transform-origin:0 0;">1-30</div>
<div class="t" style="left:531px;top:511.14px;font-size:12px;color:#333;transform:scaleX(0.917);transform-origin:0 0;">Отдел орг...</div>
<div class="t" style="left:531px;top:530.14px;font-size:12px;color:#333;transform:scaleX(0.917);transform-origin:0 0;">Экономист</div>
<div class="t" style="left:602px;top:511.14px;font-size:12px;color:#333;transform:scaleX(0.917);transform-origin:0 0;">2</div>
<div class="t" style="left:626px;top:511.14px;font-size:12px;color:#333;transform:scaleX(0.917);transform-origin:0 0;">2</div>
<div class="t" style="left:648px;top:511.14px;font-size:12px;color:#333;transform:scaleX(0.917);transform-origin:0 0;">1</div>
<div class="t" style="left:674px;top:511.14px;font-size:12px;color:#333;transform:scaleX(0.917);transform-origin:0 0;">В</div>
<div class="t" style="left:701px;top:511.14px;font-size:12px;color:#333;transform:scaleX(0.917);transform-origin:0 0;">В</div>
<div class="t" style="left:728px;top:511.14px;font-size:12px;color:#333;transform:scaleX(0.917);transform-origin:0 0;">В</div>
<div class="t" style="left:754px;top:511.14px;font-size:12px;color:#333;transform:scaleX(0.917);transform-origin:0 0;">2</div>
<div class="t" style="left:777px;top:511.14px;font-size:12px;color:#333;transform:scaleX(0.917);transform-origin:0 0;">2</div>
<div class="t" style="left:800px;top:511.14px;font-size:12px;color:#333;transform:scaleX(0.917);transform-origin:0 0;">2</div>
<div class="t" style="left:822px;top:511.14px;font-size:12px;color:#333;transform:scaleX(0.917);transform-origin:0 0;">2</div>
<div class="t" style="left:849px;top:511.14px;font-size:12px;color:#333;transform:scaleX(0.917);transform-origin:0 0;">В</div>
<div class="t" style="left:881px;top:511.14px;font-size:12px;color:#333;transform:scaleX(0.917);transform-origin:0 0;">В</div>
<div class="t" style="left:913px;top:511.14px;font-size:12px;color:#333;transform:scaleX(0.917);transform-origin:0 0;">2</div>
<div class="t" style="left:942px;top:511.14px;font-size:12px;color:#333;transform:scaleX(0.917);transform-origin:0 0;">2</div>
<div class="t" style="left:970px;top:511.14px;font-size:12px;color:#333;transform:scaleX(0.917);transform-origin:0 0;">2</div>
<div class="t" style="left:997px;top:511.14px;font-size:12px;color:#333;transform:scaleX(0.917);transform-origin:0 0;">2</div>
<div class="t" style="left:1025px;top:511.14px;font-size:12px;color:#333;transform:scaleX(0.917);transform-origin:0 0;">2</div>
<div class="t" style="left:1051px;top:511.14px;font-size:12px;color:#333;transform:scaleX(0.917);transform-origin:0 0;">В</div>
<div class="t" style="left:1083px;top:511.14px;font-size:12px;color:#333;transform:scaleX(0.917);transform-origin:0 0;">В</div>
<div class="t" style="left:1115px;top:511.14px;font-size:12px;color:#333;transform:scaleX(0.917);transform-origin:0 0;">2</div>
<div class="t" style="left:1143px;top:511.14px;font-size:12px;color:#333;transform:scaleX(0.917);transform-origin:0 0;">2</div>
<div class="t" style="left:1171px;top:511.14px;font-size:12px;color:#333;transform:scaleX(0.917);transform-origin:0 0;">2</div>
<div class="t" style="left:1199px;top:511.14px;font-size:12px;color:#333;transform:scaleX(0.917);transform-origin:0 0;">2</div>
<div class="t" style="left:1226px;top:511.14px;font-size:12px;color:#333;transform:scaleX(0.917);transform-origin:0 0;">2</div>
<div class="t" style="left:1254px;top:511.14px;font-size:12px;color:#333;transform:scaleX(0.917);transform-origin:0 0;">В</div>
<div class="t" style="left:1286px;top:511.14px;font-size:12px;color:#333;transform:scaleX(0.917);transform-origin:0 0;">В</div>
<div class="t" style="left:1318px;top:511.14px;font-size:12px;color:#333;transform:scaleX(0.917);transform-origin:0 0;">2</div>
<div class="t" style="left:1345px;top:511.14px;font-size:12px;color:#333;transform:scaleX(0.917);transform-origin:0 0;">2</div>
<div class="t" style="left:1374px;top:511.14px;font-size:12px;color:#333;transform:scaleX(0.917);transform-origin:0 0;">2</div>
<div class="t" style="left:1402px;top:511.14px;font-size:12px;color:#333;transform:scaleX(0.917);transform-origin:0 0;">2</div>
<div class="r" style="left:18px;top:583px;width:1407px;height:1px;background:#e6e6e6;"></div>
<div class="r" style="left:59px;top:546px;width:262px;height:37px;background:#dcdcdc;"></div>
<div class="r" style="left:598px;top:546px;width:24px;height:37px;background:#dcdcdc;"></div>
<div class="r" style="left:622px;top:546px;width:22px;height:37px;background:#dcdcdc;"></div>
<div class="r" style="left:644px;top:546px;width:26px;height:37px;background:#dcdcdc;"></div>
<div class="r" style="left:670px;top:546px;width:27px;height:37px;background:#dcdcdc;"></div>
<div class="r" style="left:697px;top:546px;width:27px;height:37px;background:#dcdcdc;"></div>
<div class="r" style="left:724px;top:546px;width:26px;height:37px;background:#dcdcdc;"></div>
<div class="r" style="left:750px;top:546px;width:23px;height:37px;background:#dcdcdc;"></div>
<div class="r" style="left:773px;top:546px;width:23px;height:37px;background:#dcdcdc;"></div>
<div class="r" style="left:796px;top:546px;width:22px;height:37px;background:#dcdcdc;"></div>
<div class="r" style="left:818px;top:546px;width:27px;height:37px;background:#dcdcdc;"></div>
<div class="r" style="left:845px;top:546px;width:32px;height:37px;background:#dcdcdc;"></div>
<div class="r" style="left:877px;top:546px;width:32px;height:37px;background:#dcdcdc;"></div>
<div class="r" style="left:909px;top:546px;width:29px;height:37px;background:#dcdcdc;"></div>
<div class="r" style="left:938px;top:546px;width:28px;height:37px;background:#dcdcdc;"></div>
<div class="r" style="left:966px;top:546px;width:27px;height:37px;background:#dcdcdc;"></div>
<div class="r" style="left:993px;top:546px;width:28px;height:37px;background:#b0dfe5;"></div>
<div class="r" style="left:1021px;top:546px;width:26px;height:37px;background:#b0dfe5;"></div>
<div class="r" style="left:1047px;top:546px;width:32px;height:37px;background:#b0dfe5;"></div>
<div class="r" style="left:1079px;top:546px;width:32px;height:37px;background:#b0dfe5;"></div>
<div class="r" style="left:1111px;top:546px;width:28px;height:37px;background:#b0dfe5;"></div>
<div class="r" style="left:1139px;top:546px;width:28px;height:37px;background:#b0dfe5;"></div>
<div class="r" style="left:1167px;top:546px;width:28px;height:37px;background:#b0dfe5;"></div>
<div class="r" style="left:1195px;top:546px;width:27px;height:37px;background:#b0dfe5;"></div>
<div class="r" style="left:1222px;top:546px;width:28px;height:37px;background:#b0dfe5;"></div>
<div class="r" style="left:1250px;top:546px;width:32px;height:37px;background:#b0dfe5;"></div>
<div class="r" style="left:1282px;top:546px;width:32px;height:37px;background:#b0dfe5;"></div>
<div class="r" style="left:1314px;top:546px;width:27px;height:37px;background:#b0dfe5;"></div>
<div class="r" style="left:1341px;top:546px;width:29px;height:37px;background:#b0dfe5;"></div>
<div class="r" style="left:1370px;top:546px;width:28px;height:37px;background:#b0dfe5;"></div>
<div class="r" style="left:1398px;top:546px;width:28px;height:37px;background:#b0dfe5;"></div>
<div class="r" style="left:476px;top:545px;width:1px;height:39px;background:#cfcfcf;"></div>
<div class="t" style="left:18px;top:549.14px;font-size:12px;color:#333;width:36px;text-align:right;transform:scaleX(0.917);transform-origin:100% 0;">7</div>
<div class="t" style="left:63px;top:549.14px;font-size:12px;color:#333;transform:scaleX(0.8940750000000001);transform-origin:0 0;">Хашина Ольга Александровна (внеш.) (Прин) (0,...</div>
<div class="t" style="left:63px;top:568.14px;font-size:12px;color:#333;transform:scaleX(0.917);transform-origin:0 0;">Количество явок</div>
<div class="r" style="left:327px;top:549px;width:13px;height:13px;background:#fff;border:1px solid #9a9a9a;border-radius:2px;"></div>
<div class="t" style="left:393px;top:549.14px;font-size:12px;color:#333;width:40px;text-align:right;transform:scaleX(0.917);transform-origin:100% 0;">83,000</div>
<div class="t" style="left:393px;top:568.14px;font-size:12px;color:#333;width:40px;text-align:right;transform:scaleX(0.917);transform-origin:100% 0;">83,000</div>
<div class="t" style="left:437px;top:549.14px;font-size:12px;color:#222;font-weight:bold;width:36px;text-align:right;transform:scaleX(0.93);transform-origin:100% 0;">83,...</div>
<div class="t" style="left:481px;top:549.14px;font-size:12px;color:#333;transform:scaleX(0.917);transform-origin:0 0;">1-30</div>
<div class="t" style="left:531px;top:549.14px;font-size:12px;color:#333;transform:scaleX(0.917);transform-origin:0 0;">Отдел орг...</div>
<div class="t" style="left:531px;top:568.14px;font-size:12px;color:#333;transform:scaleX(0.917);transform-origin:0 0;">Психолог</div>
<div class="t" style="left:602px;top:549.14px;font-size:12px;color:#333;transform:scaleX(0.917);transform-origin:0 0;">4</div>
<div class="t" style="left:626px;top:549.14px;font-size:12px;color:#333;transform:scaleX(0.917);transform-origin:0 0;">4</div>
<div class="t" style="left:648px;top:549.14px;font-size:12px;color:#333;transform:scaleX(0.917);transform-origin:0 0;">3</div>
<div class="t" style="left:674px;top:549.14px;font-size:12px;color:#333;transform:scaleX(0.917);transform-origin:0 0;">В</div>
<div class="t" style="left:701px;top:549.14px;font-size:12px;color:#333;transform:scaleX(0.917);transform-origin:0 0;">В</div>
<div class="t" style="left:728px;top:549.14px;font-size:12px;color:#333;transform:scaleX(0.917);transform-origin:0 0;">В</div>
<div class="t" style="left:754px;top:549.14px;font-size:12px;color:#333;transform:scaleX(0.917);transform-origin:0 0;">4</div>
<div class="t" style="left:777px;top:549.14px;font-size:12px;color:#333;transform:scaleX(0.917);transform-origin:0 0;">4</div>
<div class="t" style="left:800px;top:549.14px;font-size:12px;color:#333;transform:scaleX(0.917);transform-origin:0 0;">4</div>
<div class="t" style="left:822px;top:549.14px;font-size:12px;color:#333;transform:scaleX(0.917);transform-origin:0 0;">4</div>
<div class="t" style="left:849px;top:549.14px;font-size:12px;color:#333;transform:scaleX(0.917);transform-origin:0 0;">В</div>
<div class="t" style="left:881px;top:549.14px;font-size:12px;color:#333;transform:scaleX(0.917);transform-origin:0 0;">В</div>
<div class="t" style="left:913px;top:549.14px;font-size:12px;color:#333;transform:scaleX(0.917);transform-origin:0 0;">4</div>
<div class="t" style="left:942px;top:549.14px;font-size:12px;color:#333;transform:scaleX(0.917);transform-origin:0 0;">4</div>
<div class="t" style="left:970px;top:549.14px;font-size:12px;color:#333;transform:scaleX(0.917);transform-origin:0 0;">4</div>
<div class="t" style="left:997px;top:549.14px;font-size:12px;color:#333;transform:scaleX(0.917);transform-origin:0 0;">4</div>
<div class="t" style="left:1025px;top:549.14px;font-size:12px;color:#333;transform:scaleX(0.917);transform-origin:0 0;">4</div>
<div class="t" style="left:1051px;top:549.14px;font-size:12px;color:#333;transform:scaleX(0.917);transform-origin:0 0;">В</div>
<div class="t" style="left:1083px;top:549.14px;font-size:12px;color:#333;transform:scaleX(0.917);transform-origin:0 0;">В</div>
<div class="t" style="left:1115px;top:549.14px;font-size:12px;color:#333;transform:scaleX(0.917);transform-origin:0 0;">4</div>
<div class="t" style="left:1143px;top:549.14px;font-size:12px;color:#333;transform:scaleX(0.917);transform-origin:0 0;">4</div>
<div class="t" style="left:1171px;top:549.14px;font-size:12px;color:#333;transform:scaleX(0.917);transform-origin:0 0;">4</div>
<div class="t" style="left:1199px;top:549.14px;font-size:12px;color:#333;transform:scaleX(0.917);transform-origin:0 0;">4</div>
<div class="t" style="left:1226px;top:549.14px;font-size:12px;color:#333;transform:scaleX(0.917);transform-origin:0 0;">4</div>
<div class="t" style="left:1254px;top:549.14px;font-size:12px;color:#333;transform:scaleX(0.917);transform-origin:0 0;">В</div>
<div class="t" style="left:1286px;top:549.14px;font-size:12px;color:#333;transform:scaleX(0.917);transform-origin:0 0;">В</div>
<div class="t" style="left:1318px;top:549.14px;font-size:12px;color:#333;transform:scaleX(0.917);transform-origin:0 0;">4</div>
<div class="t" style="left:1345px;top:549.14px;font-size:12px;color:#333;transform:scaleX(0.917);transform-origin:0 0;">4</div>
<div class="t" style="left:1374px;top:549.14px;font-size:12px;color:#333;transform:scaleX(0.917);transform-origin:0 0;">4</div>
<div class="t" style="left:1402px;top:549.14px;font-size:12px;color:#333;transform:scaleX(0.917);transform-origin:0 0;">4</div>
<div class="r" style="left:18px;top:621px;width:1407px;height:1px;background:#e6e6e6;"></div>
<div class="r" style="left:59px;top:584px;width:262px;height:37px;background:#dcdcdc;"></div>
<div class="r" style="left:598px;top:584px;width:24px;height:37px;background:#dcdcdc;"></div>
<div class="r" style="left:622px;top:584px;width:22px;height:37px;background:#dcdcdc;"></div>
<div class="r" style="left:644px;top:584px;width:26px;height:37px;background:#dcdcdc;"></div>
<div class="r" style="left:670px;top:584px;width:27px;height:37px;background:#dcdcdc;"></div>
<div class="r" style="left:697px;top:584px;width:27px;height:37px;background:#dcdcdc;"></div>
<div class="r" style="left:724px;top:584px;width:26px;height:37px;background:#dcdcdc;"></div>
<div class="r" style="left:750px;top:584px;width:23px;height:37px;background:#dcdcdc;"></div>
<div class="r" style="left:773px;top:584px;width:23px;height:37px;background:#dcdcdc;"></div>
<div class="r" style="left:796px;top:584px;width:22px;height:37px;background:#dcdcdc;"></div>
<div class="r" style="left:818px;top:584px;width:27px;height:37px;background:#dcdcdc;"></div>
<div class="r" style="left:845px;top:584px;width:32px;height:37px;background:#dcdcdc;"></div>
<div class="r" style="left:877px;top:584px;width:32px;height:37px;background:#dcdcdc;"></div>
<div class="r" style="left:909px;top:584px;width:29px;height:37px;background:#dcdcdc;"></div>
<div class="r" style="left:938px;top:584px;width:28px;height:37px;background:#dcdcdc;"></div>
<div class="r" style="left:966px;top:584px;width:27px;height:37px;background:#dcdcdc;"></div>
<div class="r" style="left:993px;top:584px;width:28px;height:37px;background:#b0dfe5;"></div>
<div class="r" style="left:1021px;top:584px;width:26px;height:37px;background:#b0dfe5;"></div>
<div class="r" style="left:1047px;top:584px;width:32px;height:37px;background:#b0dfe5;"></div>
<div class="r" style="left:1079px;top:584px;width:32px;height:37px;background:#b0dfe5;"></div>
<div class="r" style="left:1111px;top:584px;width:28px;height:37px;background:#b0dfe5;"></div>
<div class="r" style="left:1139px;top:584px;width:28px;height:37px;background:#b0dfe5;"></div>
<div class="r" style="left:1167px;top:584px;width:28px;height:37px;background:#b0dfe5;"></div>
<div class="r" style="left:1195px;top:584px;width:27px;height:37px;background:#b0dfe5;"></div>
<div class="r" style="left:1222px;top:584px;width:28px;height:37px;background:#b0dfe5;"></div>
<div class="r" style="left:1250px;top:584px;width:32px;height:37px;background:#b0dfe5;"></div>
<div class="r" style="left:1282px;top:584px;width:32px;height:37px;background:#b0dfe5;"></div>
<div class="r" style="left:1314px;top:584px;width:27px;height:37px;background:#b0dfe5;"></div>
<div class="r" style="left:1341px;top:584px;width:29px;height:37px;background:#b0dfe5;"></div>
<div class="r" style="left:1370px;top:584px;width:28px;height:37px;background:#b0dfe5;"></div>
<div class="r" style="left:1398px;top:584px;width:28px;height:37px;background:#b0dfe5;"></div>
<div class="r" style="left:476px;top:583px;width:1px;height:39px;background:#cfcfcf;"></div>
<div class="t" style="left:18px;top:587.14px;font-size:12px;color:#333;width:36px;text-align:right;transform:scaleX(0.917);transform-origin:100% 0;">8</div>
<div class="t" style="left:63px;top:587.14px;font-size:12px;color:#333;transform:scaleX(0.8940750000000001);transform-origin:0 0;">Чичёва Светлана Евгеньевна (внеш.) (Прин) (0,5...</div>
<div class="t" style="left:63px;top:606.14px;font-size:12px;color:#333;transform:scaleX(0.917);transform-origin:0 0;">Количество явок</div>
<div class="r" style="left:327px;top:587px;width:13px;height:13px;background:#fff;border:1px solid #9a9a9a;border-radius:2px;"></div>
<div class="t" style="left:393px;top:587.14px;font-size:12px;color:#333;width:40px;text-align:right;transform:scaleX(0.917);transform-origin:100% 0;">83,000</div>
<div class="t" style="left:393px;top:606.14px;font-size:12px;color:#333;width:40px;text-align:right;transform:scaleX(0.917);transform-origin:100% 0;">83,000</div>
<div class="t" style="left:437px;top:587.14px;font-size:12px;color:#222;font-weight:bold;width:36px;text-align:right;transform:scaleX(0.93);transform-origin:100% 0;">83,...</div>
<div class="t" style="left:481px;top:587.14px;font-size:12px;color:#333;transform:scaleX(0.917);transform-origin:0 0;">1-30</div>
<div class="t" style="left:531px;top:587.14px;font-size:12px;color:#333;transform:scaleX(0.917);transform-origin:0 0;">Отдел орг...</div>
<div class="t" style="left:531px;top:606.14px;font-size:12px;color:#333;transform:scaleX(0.917);transform-origin:0 0;">Специали...</div>
<div class="t" style="left:602px;top:587.14px;font-size:12px;color:#333;transform:scaleX(0.917);transform-origin:0 0;">4</div>
<div class="t" style="left:626px;top:587.14px;font-size:12px;color:#333;transform:scaleX(0.917);transform-origin:0 0;">4</div>
<div class="t" style="left:648px;top:587.14px;font-size:12px;color:#333;transform:scaleX(0.917);transform-origin:0 0;">3</div>
<div class="t" style="left:674px;top:587.14px;font-size:12px;color:#333;transform:scaleX(0.917);transform-origin:0 0;">В</div>
<div class="t" style="left:701px;top:587.14px;font-size:12px;color:#333;transform:scaleX(0.917);transform-origin:0 0;">В</div>
<div class="t" style="left:728px;top:587.14px;font-size:12px;color:#333;transform:scaleX(0.917);transform-origin:0 0;">В</div>
<div class="t" style="left:754px;top:587.14px;font-size:12px;color:#333;transform:scaleX(0.917);transform-origin:0 0;">4</div>
<div class="t" style="left:777px;top:587.14px;font-size:12px;color:#333;transform:scaleX(0.917);transform-origin:0 0;">4</div>
<div class="t" style="left:800px;top:587.14px;font-size:12px;color:#333;transform:scaleX(0.917);transform-origin:0 0;">4</div>
<div class="t" style="left:822px;top:587.14px;font-size:12px;color:#333;transform:scaleX(0.917);transform-origin:0 0;">4</div>
<div class="t" style="left:849px;top:587.14px;font-size:12px;color:#333;transform:scaleX(0.917);transform-origin:0 0;">В</div>
<div class="t" style="left:881px;top:587.14px;font-size:12px;color:#333;transform:scaleX(0.917);transform-origin:0 0;">В</div>
<div class="t" style="left:913px;top:587.14px;font-size:12px;color:#333;transform:scaleX(0.917);transform-origin:0 0;">4</div>
<div class="t" style="left:942px;top:587.14px;font-size:12px;color:#333;transform:scaleX(0.917);transform-origin:0 0;">4</div>
<div class="t" style="left:970px;top:587.14px;font-size:12px;color:#333;transform:scaleX(0.917);transform-origin:0 0;">4</div>
<div class="t" style="left:997px;top:587.14px;font-size:12px;color:#333;transform:scaleX(0.917);transform-origin:0 0;">4</div>
<div class="t" style="left:1025px;top:587.14px;font-size:12px;color:#333;transform:scaleX(0.917);transform-origin:0 0;">4</div>
<div class="t" style="left:1051px;top:587.14px;font-size:12px;color:#333;transform:scaleX(0.917);transform-origin:0 0;">В</div>
<div class="t" style="left:1083px;top:587.14px;font-size:12px;color:#333;transform:scaleX(0.917);transform-origin:0 0;">В</div>
<div class="t" style="left:1115px;top:587.14px;font-size:12px;color:#333;transform:scaleX(0.917);transform-origin:0 0;">4</div>
<div class="t" style="left:1143px;top:587.14px;font-size:12px;color:#333;transform:scaleX(0.917);transform-origin:0 0;">4</div>
<div class="t" style="left:1171px;top:587.14px;font-size:12px;color:#333;transform:scaleX(0.917);transform-origin:0 0;">4</div>
<div class="t" style="left:1199px;top:587.14px;font-size:12px;color:#333;transform:scaleX(0.917);transform-origin:0 0;">4</div>
<div class="t" style="left:1226px;top:587.14px;font-size:12px;color:#333;transform:scaleX(0.917);transform-origin:0 0;">4</div>
<div class="t" style="left:1254px;top:587.14px;font-size:12px;color:#333;transform:scaleX(0.917);transform-origin:0 0;">В</div>
<div class="t" style="left:1286px;top:587.14px;font-size:12px;color:#333;transform:scaleX(0.917);transform-origin:0 0;">В</div>
<div class="t" style="left:1318px;top:587.14px;font-size:12px;color:#333;transform:scaleX(0.917);transform-origin:0 0;">4</div>
<div class="t" style="left:1345px;top:587.14px;font-size:12px;color:#333;transform:scaleX(0.917);transform-origin:0 0;">4</div>
<div class="t" style="left:1374px;top:587.14px;font-size:12px;color:#333;transform:scaleX(0.917);transform-origin:0 0;">4</div>
<div class="t" style="left:1402px;top:587.14px;font-size:12px;color:#333;transform:scaleX(0.917);transform-origin:0 0;">4</div>
<div class="r" style="left:17px;top:294px;width:1409px;height:373px;border:1px solid #a9a9a9;"></div>
<div class="t" style="left:17px;top:673.33px;font-size:14px;color:#1a9a4a;transform:scaleX(0.912);transform-origin:0 0;">Статус документа</div>
<div class="r" style="left:17px;top:693px;width:2px;height:52px;background:#1a9a4a;"></div>
<div class="t" style="left:25px;top:696.14px;font-size:12px;color:#a0a0a0;transform:scaleX(0.917);transform-origin:0 0;">Текущий статус:</div>
<div class="r" style="left:113px;top:693px;width:168px;height:20px;background:#fff;border:1px solid #d8d8d8;border-radius:2px;"></div>
<div class="t" style="left:116px;top:696.14px;font-size:12px;color:#9a9a9a;transform:scaleX(0.917);transform-origin:0 0;">Текущий месяц</div>
<div class="r" style="left:259px;top:694px;width:1px;height:18px;background:#dedede;"></div>
<svg class="r" style="left:266.7px;top:702px" width="6" height="4" viewBox="0 0 6 4"><path d="M0 0 H5 L2.5 3 Z" fill="#a0a0a0"/></svg>
<div class="t" style="left:290px;top:697.14px;font-size:12px;color:#222;font-weight:bold;transform:scaleX(1.01184);transform-origin:0 0;">Редактируется</div>
<div class="t" style="left:425px;top:719.14px;font-size:12px;color:#ff0000;width:600px;text-align:center;transform:scaleX(0.917);transform-origin:50% 0;">Первая половина месяца закрыта.</div>
<div class="t" style="left:425px;top:732.14px;font-size:12px;color:#ff0000;width:600px;text-align:center;transform:scaleX(0.917);transform-origin:50% 0;">Данные за вторую половину месяца не закрыты! Необходимо завершить редактирование!</div>
<div class="t" style="left:17px;top:761.14px;font-size:12px;color:#4a4a4a;transform:scaleX(0.917);transform-origin:0 0;">Комментарий:</div>
<div class="r" style="left:94px;top:758px;width:1109px;height:20px;background:#fff;border:1px solid #a4a4a4;border-radius:3px;"></div>
<div class="t" style="left:1211px;top:761.14px;font-size:12px;color:#4a4a4a;transform:scaleX(0.917);transform-origin:0 0;">Ответственный:</div>
<div class="r" style="left:1297px;top:758px;width:129px;height:20px;background:#fff;border:1px solid #cfcfcf;border-radius:3px;"></div>
<div class="t" style="left:1300px;top:761.14px;font-size:12px;color:#222;transform:scaleX(0.917);transform-origin:0 0;">Петров</div>
</body></html>
